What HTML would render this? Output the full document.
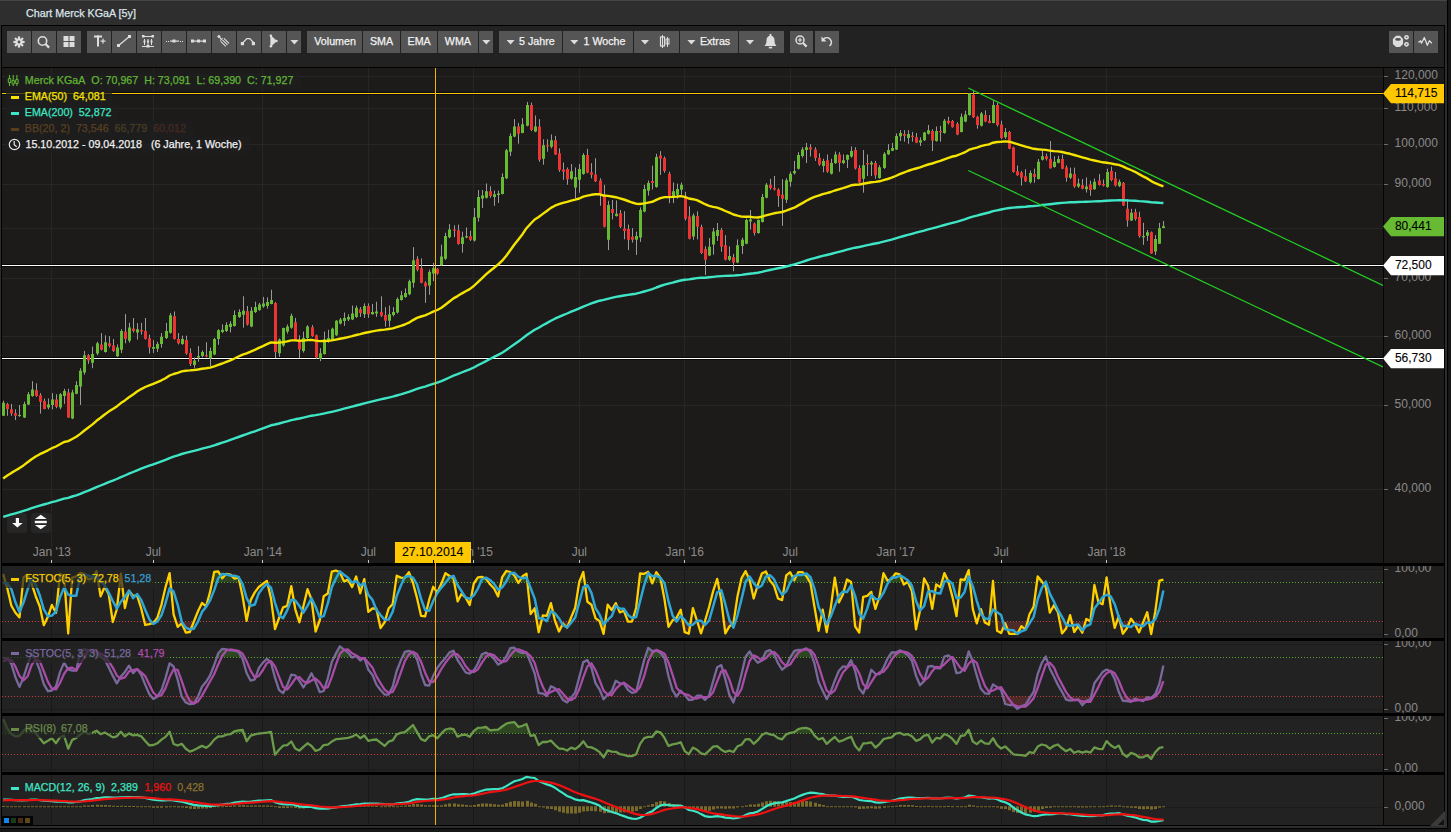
<!DOCTYPE html><html><head><meta charset="utf-8"><style>*{margin:0;padding:0;box-sizing:border-box}html,body{width:1451px;height:832px;overflow:hidden;background:#161616;font-family:"Liberation Sans", sans-serif}.a{position:absolute}.b{position:absolute;background:#555;top:31px;height:22px}.t{position:absolute;white-space:nowrap;-webkit-text-stroke:0.25px currentColor}.n{-webkit-text-stroke:0}</style></head><body><div class="a" style="left:0;top:0;width:1448px;height:829px;background:#000"></div><div class="a" style="left:0;top:0;width:1447px;height:828px;background:#2e2e2e;border-top:1px solid #454545"></div><div class="a" style="left:1px;top:25px;width:1444px;height:801px;background:#000"></div><div class="a" style="left:2px;top:26px;width:1442px;height:41px;background:#222"></div><div class="a" style="left:2px;top:68px;width:1442px;height:495px;background:#1c1b1a"></div><div class="a" style="left:2px;top:566px;width:1381px;height:72px;background:#222"></div><div class="a" style="left:1384px;top:566px;width:60px;height:72px;background:#1f1e1d"></div><div class="a" style="left:2px;top:641px;width:1381px;height:72px;background:#222"></div><div class="a" style="left:1384px;top:641px;width:60px;height:72px;background:#1f1e1d"></div><div class="a" style="left:2px;top:716px;width:1381px;height:56px;background:#222"></div><div class="a" style="left:1384px;top:716px;width:60px;height:56px;background:#1f1e1d"></div><div class="a" style="left:2px;top:775px;width:1381px;height:50px;background:#222"></div><div class="a" style="left:1384px;top:775px;width:60px;height:50px;background:#1f1e1d"></div><div class="a" style="left:7px;top:512.5px;width:20px;height:20px;background:#262626;border-radius:3px"></div><div class="a" style="left:31px;top:512.5px;width:20px;height:20px;background:#262626;border-radius:3px"></div><div class="a" style="left:1383px;top:68px;width:1px;height:757px;background:#050505"></div><svg width="1451" height="832" viewBox="0 0 1451 832" style="position:absolute;left:0;top:0"><defs><clipPath id="cm"><rect x="2" y="68" width="1381" height="495"/></clipPath><clipPath id="c1"><rect x="2" y="566" width="1381" height="72"/></clipPath><clipPath id="c2"><rect x="2" y="641" width="1381" height="72"/></clipPath><clipPath id="c3"><rect x="2" y="716" width="1381" height="56"/></clipPath><clipPath id="c4"><rect x="2" y="775" width="1381" height="50"/></clipPath></defs><g clip-path="url(#cm)"><line x1="51.5" y1="68" x2="51.5" y2="563" stroke="#262626" stroke-width="1"/><line x1="153.5" y1="68" x2="153.5" y2="563" stroke="#262626" stroke-width="1"/><line x1="262.5" y1="68" x2="262.5" y2="563" stroke="#262626" stroke-width="1"/><line x1="368.5" y1="68" x2="368.5" y2="563" stroke="#262626" stroke-width="1"/><line x1="473.5" y1="68" x2="473.5" y2="563" stroke="#262626" stroke-width="1"/><line x1="579.5" y1="68" x2="579.5" y2="563" stroke="#262626" stroke-width="1"/><line x1="684.5" y1="68" x2="684.5" y2="563" stroke="#262626" stroke-width="1"/><line x1="790.5" y1="68" x2="790.5" y2="563" stroke="#262626" stroke-width="1"/><line x1="895.5" y1="68" x2="895.5" y2="563" stroke="#262626" stroke-width="1"/><line x1="1001.5" y1="68" x2="1001.5" y2="563" stroke="#262626" stroke-width="1"/><line x1="1106.5" y1="68" x2="1106.5" y2="563" stroke="#262626" stroke-width="1"/><line x1="2" y1="76.5" x2="1383" y2="76.5" stroke="#262626" stroke-width="1"/><line x1="2" y1="108.5" x2="1383" y2="108.5" stroke="#262626" stroke-width="1"/><line x1="2" y1="144.5" x2="1383" y2="144.5" stroke="#262626" stroke-width="1"/><line x1="2" y1="184.5" x2="1383" y2="184.5" stroke="#262626" stroke-width="1"/><line x1="2" y1="228.5" x2="1383" y2="228.5" stroke="#262626" stroke-width="1"/><line x1="2" y1="278.5" x2="1383" y2="278.5" stroke="#262626" stroke-width="1"/><line x1="2" y1="336.5" x2="1383" y2="336.5" stroke="#262626" stroke-width="1"/><line x1="2" y1="405.5" x2="1383" y2="405.5" stroke="#262626" stroke-width="1"/><line x1="2" y1="489.5" x2="1383" y2="489.5" stroke="#262626" stroke-width="1"/></g><line x1="51.5" y1="566" x2="51.5" y2="638" stroke="#191919" stroke-width="1"/><line x1="153.5" y1="566" x2="153.5" y2="638" stroke="#191919" stroke-width="1"/><line x1="262.5" y1="566" x2="262.5" y2="638" stroke="#191919" stroke-width="1"/><line x1="368.5" y1="566" x2="368.5" y2="638" stroke="#191919" stroke-width="1"/><line x1="473.5" y1="566" x2="473.5" y2="638" stroke="#191919" stroke-width="1"/><line x1="579.5" y1="566" x2="579.5" y2="638" stroke="#191919" stroke-width="1"/><line x1="684.5" y1="566" x2="684.5" y2="638" stroke="#191919" stroke-width="1"/><line x1="790.5" y1="566" x2="790.5" y2="638" stroke="#191919" stroke-width="1"/><line x1="895.5" y1="566" x2="895.5" y2="638" stroke="#191919" stroke-width="1"/><line x1="1001.5" y1="566" x2="1001.5" y2="638" stroke="#191919" stroke-width="1"/><line x1="1106.5" y1="566" x2="1106.5" y2="638" stroke="#191919" stroke-width="1"/><line x1="2" y1="569.5" x2="1383" y2="569.5" stroke="#1b1b1b" stroke-width="1"/><line x1="2" y1="634.5" x2="1383" y2="634.5" stroke="#1b1b1b" stroke-width="1"/><line x1="51.5" y1="641" x2="51.5" y2="713" stroke="#191919" stroke-width="1"/><line x1="153.5" y1="641" x2="153.5" y2="713" stroke="#191919" stroke-width="1"/><line x1="262.5" y1="641" x2="262.5" y2="713" stroke="#191919" stroke-width="1"/><line x1="368.5" y1="641" x2="368.5" y2="713" stroke="#191919" stroke-width="1"/><line x1="473.5" y1="641" x2="473.5" y2="713" stroke="#191919" stroke-width="1"/><line x1="579.5" y1="641" x2="579.5" y2="713" stroke="#191919" stroke-width="1"/><line x1="684.5" y1="641" x2="684.5" y2="713" stroke="#191919" stroke-width="1"/><line x1="790.5" y1="641" x2="790.5" y2="713" stroke="#191919" stroke-width="1"/><line x1="895.5" y1="641" x2="895.5" y2="713" stroke="#191919" stroke-width="1"/><line x1="1001.5" y1="641" x2="1001.5" y2="713" stroke="#191919" stroke-width="1"/><line x1="1106.5" y1="641" x2="1106.5" y2="713" stroke="#191919" stroke-width="1"/><line x1="2" y1="644.5" x2="1383" y2="644.5" stroke="#1b1b1b" stroke-width="1"/><line x1="2" y1="709.5" x2="1383" y2="709.5" stroke="#1b1b1b" stroke-width="1"/><line x1="51.5" y1="716" x2="51.5" y2="772" stroke="#191919" stroke-width="1"/><line x1="153.5" y1="716" x2="153.5" y2="772" stroke="#191919" stroke-width="1"/><line x1="262.5" y1="716" x2="262.5" y2="772" stroke="#191919" stroke-width="1"/><line x1="368.5" y1="716" x2="368.5" y2="772" stroke="#191919" stroke-width="1"/><line x1="473.5" y1="716" x2="473.5" y2="772" stroke="#191919" stroke-width="1"/><line x1="579.5" y1="716" x2="579.5" y2="772" stroke="#191919" stroke-width="1"/><line x1="684.5" y1="716" x2="684.5" y2="772" stroke="#191919" stroke-width="1"/><line x1="790.5" y1="716" x2="790.5" y2="772" stroke="#191919" stroke-width="1"/><line x1="895.5" y1="716" x2="895.5" y2="772" stroke="#191919" stroke-width="1"/><line x1="1001.5" y1="716" x2="1001.5" y2="772" stroke="#191919" stroke-width="1"/><line x1="1106.5" y1="716" x2="1106.5" y2="772" stroke="#191919" stroke-width="1"/><line x1="2" y1="718.5" x2="1383" y2="718.5" stroke="#1b1b1b" stroke-width="1"/><line x1="2" y1="769.5" x2="1383" y2="769.5" stroke="#1b1b1b" stroke-width="1"/><line x1="51.5" y1="775" x2="51.5" y2="825" stroke="#191919" stroke-width="1"/><line x1="153.5" y1="775" x2="153.5" y2="825" stroke="#191919" stroke-width="1"/><line x1="262.5" y1="775" x2="262.5" y2="825" stroke="#191919" stroke-width="1"/><line x1="368.5" y1="775" x2="368.5" y2="825" stroke="#191919" stroke-width="1"/><line x1="473.5" y1="775" x2="473.5" y2="825" stroke="#191919" stroke-width="1"/><line x1="579.5" y1="775" x2="579.5" y2="825" stroke="#191919" stroke-width="1"/><line x1="684.5" y1="775" x2="684.5" y2="825" stroke="#191919" stroke-width="1"/><line x1="790.5" y1="775" x2="790.5" y2="825" stroke="#191919" stroke-width="1"/><line x1="895.5" y1="775" x2="895.5" y2="825" stroke="#191919" stroke-width="1"/><line x1="1001.5" y1="775" x2="1001.5" y2="825" stroke="#191919" stroke-width="1"/><line x1="1106.5" y1="775" x2="1106.5" y2="825" stroke="#191919" stroke-width="1"/><line x1="2" y1="807.5" x2="1383" y2="807.5" stroke="#1b1b1b" stroke-width="1"/><g clip-path="url(#cm)"><rect x="2" y="92" width="1381" height="3" fill="#060a16"/><rect x="2" y="93" width="1381" height="1" fill="#ffc800"/><rect x="2" y="264" width="1381" height="3" fill="#080808"/><rect x="2" y="265" width="1381" height="1" fill="#ffffff"/><rect x="2" y="357" width="1381" height="3" fill="#080808"/><rect x="2" y="358" width="1381" height="1" fill="#ffffff"/><path d="M3.5 400.7V415.8M7.5 402.8V415.8M11.5 403.9V415.8M15.5 409.3V420.1M19.5 405V416.9M24.5 401.7V418M28.5 392V405M32.5 381.2V396.8M36.5 383.3V396.8M40.5 393.1V413.6M44.5 398.5V409.3M48.5 398.5V409.3M52.5 393.1V409.3M56.5 394.2V408.2M60.5 393.1V409.3M64.5 388.8V403.9M68.5 388.8V418M72.5 389.8V419.1M76.5 381.2V394.2M80.5 368.2V405M84.5 350.9V374.7M88.5 354.1V363.9M92.5 346.6V368.2M97.5 341.8V355.2M101.5 333.1V350.5M105.5 335.3V352.6M109.5 336.2V347.6M113.5 339V352M117.5 344.4V356.9M121.5 329.2V353.1M125.5 314.1V343.3M129.5 322.8V342.7M133.5 318V332.5M137.5 323.2V339.6M141.5 322.8V334.7M145.5 318V339.6M149.5 334.7V353.5M153.5 340.1V353.1M157.5 341.8V352M161.5 333.1V347.6M166.5 322.8V339M170.5 313V333.6M174.5 311.5V339.6M178.5 333.1V344.4M182.5 335.7V344.8M186.5 335.7V354.8M190.5 348.3V366M194.5 357.4V367.8M198.5 346.1V361.7M202.5 350.5V357.4M206.5 342.2V357.4M210.5 347.6V366M214.5 337.9V355.2M218.5 329.2V344.8M222.5 324.4V333.1M226.5 322.3V332M230.5 321.2V332.4M234.5 310.4V326.6M239.5 309.3V317.9M243.5 296.3V327.7M247.5 306V325.5M251.5 307.1V327.2M255.5 301.7V313M259.5 302.8V310.8M263.5 296.9V307.8M267.5 297.4V308.6M271.5 289.8V304.3M275.5 302.1V358M279.5 338.5V356.9M283.5 327.7V346.7M287.5 324.4V333.7M291.5 313.6V328.8M295.5 317.9V340.7M299.5 335.3V358M303.5 331.6V352.6M307.5 325.1V339.6M312.5 325.1V336.8M316.5 334.6V359.1M320.5 348.2V361.2M324.5 331.6V354.7M328.5 329.8V342.8M332.5 327.7V341.1M336.5 320.1V335.9M340.5 317.9V324.4M344.5 312.5V325.9M348.5 314.3V321.2M352.5 305.6V320.1M356.5 305.6V317.9M360.5 307.1V316.9M364.5 303.4V317.9M368.5 303.4V317.9M372.5 303.9V314.7M376.5 301.7V316.9M381.5 296.3V316.9M385.5 307.1V326.6M389.5 305.6V326.6M393.5 307.1V316.4M397.5 297.4V313.6M401.5 290.9V300.6M405.5 288.3V297.8M409.5 279.6V295.2M413.5 247.2V287.6M417.5 256.3V271.4M421.5 258.4V283.3M425.5 281.2V302.8M429.5 269.7V294.8M433.5 262.8V281.2M437.5 268.2V274.7M441.5 244.7V265.7M445.5 232.8V259.9M449.5 224.2V238.2M454.5 225.3V237.2M458.5 224.6V244.7M462.5 231.7V252.7M466.5 227.4V238.2M470.5 230.7V241M474.5 207.9V241.5M478.5 190V221.6M482.5 190V207.9M486.5 183.5V198.6M490.5 186.3V197.8M494.5 190.6V205.8M498.5 190.6V203M502.5 173.3V194.3M506.5 148.9V179.2M510.5 133.3V156M514.5 119.2V137.2M518.5 122.9V143.7M522.5 118.1V133.3M527.5 101.9V126.4M531.5 102.6V131.1M535.5 115.5V132.2M539.5 119.2V161.8M543.5 139.3V164.7M547.5 139.3V151.7M551.5 134.4V148.4M555.5 135.9V154.9M559.5 148.4V171.8M563.5 162.5V179.8M567.5 167.5V184.8M571.5 164V179.8M575.5 167.5V198.2M579.5 164V192.8M583.5 153.2V174.8M587.5 148.9V173.3M591.5 163.1V178.3M595.5 158.2V182M600.5 178.3V205.8M604.5 184.8V227.4M608.5 200.8V250.1M612.5 199.9V219.4M616.5 200.4V216.6M620.5 210.1V228.1M624.5 211.2V239.3M628.5 224.6V250.1M632.5 228.1V242.6M636.5 231.7V254.9M640.5 207.3V241.9M644.5 184.8V212.3M648.5 180.5V195.6M652.5 165.7V189.5M656.5 153.8V187.8M660.5 151.1V174.9M664.5 156.5V172.8M669.5 171.7V203.1M673.5 182.5V203.1M677.5 183.6V198.7M681.5 182.5V194.8M685.5 191.8V220.4M689.5 206.3V239.4M693.5 213.4V239.8M697.5 211.3V239.4M701.5 224.7V253.9M705.5 246.3V274.9M709.5 238.1V256.1M713.5 227.9V254.6M717.5 223V240.9M721.5 227.9V251.7M725.5 235.1V260.4M729.5 246.3V261M733.5 253.9V271.2M737.5 239.4V263.2M742.5 237.7V253.9M746.5 218.6V244.2M750.5 210V229.5M754.5 222.5V235.5M758.5 219.3V233.8M762.5 194V222.5M766.5 183.1V198.3M770.5 178.8V189.6M774.5 176V190.5M778.5 188.3V206.9M782.5 179.2V225.8M786.5 178.2V203.1M790.5 171.7V186.8M794.5 160.9V174.5M798.5 152.2V169.5M802.5 147.2V157.6M806.5 142.9V163M810.5 144.2V156.5M815.5 147.2V160.9M819.5 153.3V165.8M823.5 158.7V172.3M827.5 154.4V172.8M831.5 158.7V174.5M835.5 151.5V164.1M839.5 152.2V171.7M843.5 154.4V164.1M847.5 154.4V168M851.5 146.4V157.6M855.5 147.2V169.5M859.5 165.2V183.6M863.5 150V192.7M867.5 154.4V176M871.5 160.9V176M875.5 160.9V178.8M879.5 165.2V178.8M884.5 152.2V168.9M888.5 144.2V155M892.5 142.9V151.1M896.5 133.4V150M900.5 130.2V141M904.5 130.2V141.7M908.5 130.2V143.8M912.5 131.9V141.7M916.5 133V143.2M920.5 137.3V146M924.5 131.9V141M928.5 125V134.5M932.5 129.3V151M936.5 126.5V141.7M940.5 125.9V141.7M944.5 119V133.7M948.5 116.8V124.4M952.5 120V127.6M957.5 122.2V135.2M961.5 113.5V132.4M965.5 110.7V122.2M969.5 93V115.7M973.5 90.8V117.9M977.5 115.7V128.7M981.5 112V126.5M985.5 110.3V122.2M989.5 115.1V123.3M993.5 99.9V123.3M997.5 102.7V126.5M1001.5 120.7V138.9M1005.5 128V138.9M1009.5 130.9V149.2M1013.5 146.7V172.6M1017.5 165.5V175.7M1021.5 170.9V185.6M1025.5 169.2V182.1M1030.5 170.5V183.4M1034.5 168.7V182.8M1038.5 159V179.5M1042.5 150.3V160.5M1046.5 153.6V160.5M1050.5 141V168.7M1054.5 156.2V167.6M1058.5 155.7V163.3M1062.5 154.7V169.2M1066.5 165.5V181.7M1070.5 167.6V179.1M1074.5 167.6V187.8M1078.5 178.5V187.8M1082.5 179.1V189.3M1086.5 177.4V192.5M1090.5 180.6V195.8M1094.5 178.5V189.9M1099.5 174.1V185.6M1103.5 179.5V186.5M1107.5 168.7V187.8M1111.5 166.6V181.3M1115.5 172V186.5M1119.5 179.5V187.1M1123.5 182V206M1127.5 199V226.7M1131.5 208.8V221M1135.5 208.8V220.7M1139.5 211.7V237.7M1143.5 222.8V244.9M1147.5 230.1V240.9M1151.5 231.5V253.9M1155.5 235.1V255M1159.5 222.8V244M1163.5 221V228.2" stroke="#9a9a9a" stroke-width="1" fill="none"/><path d="M2 402.8h3v13h-3zM18 414.9h3v1.2h-3zM23 403.9h3v13.6h-3zM27 394.2h3v10.4h-3zM31 389.4h3v6.5h-3zM47 404.6h3v3h-3zM51 399.6h3v5.4h-3zM59 394.2h3v13.4h-3zM63 390.9h3v5h-3zM71 392.4h3v26h-3zM75 385.1h3v8.7h-3zM79 370.8h3v15.8h-3zM83 355.2h3v17.3h-3zM91 354.1h3v8.7h-3zM96 343.3h3v10.2h-3zM104 342.2h3v9.7h-3zM116 347.6h3v8.7h-3zM120 331h3v18.8h-3zM128 327.5h3v13.2h-3zM136 329.2h3v3.2h-3zM152 347h3v1.7h-3zM156 344h3v4.8h-3zM160 336.8h3v7.1h-3zM165 331h3v6.9h-3zM169 315.2h3v17.5h-3zM181 339h3v5h-3zM193 360.6h3v4.3h-3zM197 356.1h3v1.3h-3zM201 352h3v3.9h-3zM209 350.9h3v7.6h-3zM213 339h3v15.6h-3zM217 330.3h3v8.7h-3zM221 329.8h3v2.2h-3zM225 325.1h3v5.8h-3zM229 323.8h3v3.2h-3zM233 315.1h3v10.8h-3zM238 312.1h3v4.8h-3zM242 310.8h3v3.9h-3zM250 310.8h3v15.8h-3zM254 307.1h3v5h-3zM258 304.5h3v5.4h-3zM262 303.4h3v3h-3zM266 302.1h3v3.9h-3zM270 300h3v3.9h-3zM278 339.6h3v13.6h-3zM282 328.1h3v17.3h-3zM286 326.6h3v5h-3zM290 315.8h3v11.9h-3zM302 338.1h3v13h-3zM306 326.6h3v11.5h-3zM319 353.2h3v5.8h-3zM323 339.6h3v14.5h-3zM327 338.1h3v3h-3zM331 328.8h3v11.5h-3zM335 320.8h3v14.5h-3zM339 319.5h3v3.9h-3zM343 317.9h3v3.2h-3zM347 316.9h3v2.6h-3zM351 313.6h3v5.8h-3zM355 307.8h3v9.1h-3zM363 306h3v8.2h-3zM371 312.1h3v2.2h-3zM375 311.4h3v2.2h-3zM388 314.3h3v6.5h-3zM392 312.1h3v3h-3zM396 299.1h3v13.4h-3zM400 295.2h3v4.8h-3zM404 293.1h3v3.9h-3zM408 281.2h3v13h-3zM412 260.2h3v22.5h-3zM428 272.1h3v13.4h-3zM432 268.2h3v5.4h-3zM440 256.6h3v8.7h-3zM444 236.1h3v22.7h-3zM448 229.6h3v7.6h-3zM461 237.2h3v6.9h-3zM465 236.3h3v1.3h-3zM473 217.2h3v23.2h-3zM477 197.1h3v20.6h-3zM481 195.6h3v3h-3zM485 191.3h3v6.5h-3zM493 194.3h3v2.8h-3zM497 193.4h3v1.7h-3zM501 177h3v16.9h-3zM505 150.2h3v28.1h-3zM509 135.9h3v15.8h-3zM513 126.4h3v10.2h-3zM521 124.2h3v8.7h-3zM526 105.1h3v20.6h-3zM534 126.4h3v5.2h-3zM542 145.2h3v13.6h-3zM550 140.2h3v6.5h-3zM570 171.2h3v7.6h-3zM574 177h3v10.4h-3zM578 169h3v10.8h-3zM582 154.9h3v19h-3zM607 205.1h3v34.6h-3zM615 213.8h3v2.2h-3zM635 236.1h3v3.7h-3zM639 210.1h3v27.5h-3zM643 189.1h3v22.5h-3zM647 183.1h3v7.6h-3zM655 157.1h3v29.9h-3zM672 191.2h3v6.5h-3zM676 189h3v5.8h-3zM680 184.7h3v5h-3zM692 215.6h3v21h-3zM708 246.8h3v8.7h-3zM712 231.6h3v13h-3zM716 230.1h3v5.8h-3zM728 256.1h3v3.7h-3zM736 245.3h3v17.3h-3zM741 239.8h3v6.1h-3zM745 219.9h3v23.8h-3zM749 219.3h3v2.2h-3zM757 219.9h3v13h-3zM761 197h3v25.1h-3zM765 184.7h3v13h-3zM785 180.3h3v19.5h-3zM789 173.8h3v8h-3zM793 171h3v2.2h-3zM797 155h3v13.8h-3zM801 149.4h3v6.5h-3zM805 147.2h3v2.8h-3zM822 160.9h3v5h-3zM830 163h3v10.8h-3zM834 154.4h3v8.7h-3zM842 160.2h3v2.8h-3zM846 155h3v4.8h-3zM850 151.1h3v5.4h-3zM862 165.2h3v13.6h-3zM870 162.4h3v2.2h-3zM878 167.3h3v10.8h-3zM883 153.7h3v14.3h-3zM887 150h3v4.3h-3zM891 147.9h3v2.8h-3zM895 136h3v13.4h-3zM899 133h3v3.2h-3zM907 134.1h3v3.9h-3zM919 140.2h3v2.2h-3zM923 132.4h3v7.8h-3zM927 130.2h3v3.5h-3zM935 130.9h3v10.2h-3zM943 120.7h3v12.3h-3zM960 116.8h3v15.1h-3zM964 114.6h3v6.9h-3zM968 93.4h3v21.6h-3zM980 113.5h3v12.3h-3zM992 104.9h3v18h-3zM1004 131.9h3v5.4h-3zM1029 173.1h3v9.1h-3zM1037 161.8h3v17.3h-3zM1041 156.2h3v3.5h-3zM1053 161.8h3v5.2h-3zM1057 159h3v3.7h-3zM1069 173.5h3v4.3h-3zM1077 183.4h3v3h-3zM1085 186.5h3v2.8h-3zM1093 181.7h3v7.6h-3zM1106 172h3v15.1h-3zM1118 181.7h3v4.3h-3zM1130 212.7h3v7.9h-3zM1142 236h3v1.2h-3zM1146 232.2h3v3.6h-3zM1154 239.1h3v12.5h-3zM1158 228.2h3v15.6h-3zM1162 226.2h3v1.7h-3z" fill="#66bb33"/><path d="M6 403.9h3v5h-3zM10 409.3h3v4.3h-3zM14 413.2h3v2.6h-3zM35 390.3h3v5.6h-3zM39 395.3h3v6.5h-3zM43 401.1h3v7.8h-3zM55 399.6h3v7.1h-3zM67 392.4h3v25.1h-3zM87 355.2h3v5.4h-3zM100 344.4h3v5.4h-3zM108 343.3h3v2.8h-3zM112 345.5h3v5.4h-3zM124 331.4h3v7.6h-3zM132 328.4h3v2.6h-3zM140 329.9h3v1.5h-3zM144 331h3v8h-3zM148 338.3h3v9.3h-3zM173 316.3h3v22.7h-3zM177 339h3v4.3h-3zM185 340.1h3v13.4h-3zM189 353.1h3v10.8h-3zM205 355.2h3v1.3h-3zM246 311.2h3v13.4h-3zM274 303h3v48.9h-3zM294 322.3h3v17.3h-3zM298 340.7h3v8.7h-3zM311 327.2h3v8.7h-3zM315 335.3h3v22.3h-3zM359 309.3h3v3.7h-3zM367 306h3v8.2h-3zM380 312.1h3v3.7h-3zM384 315.1h3v5.6h-3zM416 258.9h3v10.8h-3zM420 268.2h3v14.5h-3zM424 282.7h3v3.9h-3zM436 268.8h3v4.8h-3zM453 229.6h3v1.2h-3zM457 230.2h3v13.8h-3zM469 236.3h3v3.5h-3zM489 191.3h3v4.8h-3zM517 126.4h3v7.4h-3zM530 105.1h3v24.9h-3zM538 126.4h3v33.3h-3zM546 145.2h3v1.2h-3zM554 140.2h3v14.3h-3zM558 153.2h3v16.9h-3zM562 169.6h3v2.2h-3zM566 169h3v10.2h-3zM586 154.9h3v17.7h-3zM590 172.2h3v2.6h-3zM594 174.4h3v6.9h-3zM599 180.5h3v13h-3zM603 195.6h3v31.2h-3zM611 209h3v3.9h-3zM619 213.3h3v13.4h-3zM623 228.5h3v2.6h-3zM627 228.9h3v10.8h-3zM631 236.7h3v3h-3zM651 180.9h3v2.2h-3zM659 155.4h3v3.2h-3zM663 158h3v13h-3zM668 173.8h3v22.7h-3zM684 196.6h3v22.1h-3zM688 216.5h3v22.3h-3zM696 216h3v10.8h-3zM700 226.9h3v26h-3zM704 248.9h3v10.8h-3zM720 230.1h3v16.7h-3zM724 245.3h3v14.5h-3zM732 257.2h3v5.4h-3zM753 223.6h3v9.3h-3zM769 184.7h3v3.2h-3zM773 187.9h3v1.7h-3zM777 189.6h3v6.5h-3zM781 194.8h3v3.9h-3zM809 147.2h3v2.2h-3zM814 149.4h3v8.7h-3zM818 158h3v6.5h-3zM826 160.2h3v11.5h-3zM838 154.4h3v8.7h-3zM854 150h3v18.4h-3zM858 168h3v14.5h-3zM866 163h3v1.5h-3zM874 163h3v12.3h-3zM903 134.1h3v1.7h-3zM911 135.8h3v1.2h-3zM915 137.3h3v5.4h-3zM931 130.9h3v9.7h-3zM939 131.1h3v1.2h-3zM947 120.7h3v2.2h-3zM951 121.1h3v6.1h-3zM956 123.7h3v10.8h-3zM972 94.7h3v22.5h-3zM976 116.8h3v8.2h-3zM984 115.1h3v6.5h-3zM988 120.7h3v2.2h-3zM996 104.9h3v20.1h-3zM1000 124.4h3v13.6h-3zM1008 131.9h3v16.9h-3zM1012 147.5h3v24.5h-3zM1016 171.3h3v3.9h-3zM1020 172.6h3v5.2h-3zM1024 176.3h3v5h-3zM1033 174.1h3v2.8h-3zM1045 156.2h3v2.8h-3zM1049 159h3v9.3h-3zM1061 159h3v9.7h-3zM1065 167.6h3v10.2h-3zM1073 174.1h3v12.3h-3zM1081 185h3v3.7h-3zM1089 184.3h3v5.6h-3zM1098 180.6h3v4.3h-3zM1102 183.9h3v1.7h-3zM1110 170.9h3v9.1h-3zM1114 178.5h3v7.1h-3zM1122 182.9h3v22.6h-3zM1126 208.8h3v11.8h-3zM1134 212h3v6.9h-3zM1138 217.1h3v18.8h-3zM1150 232.2h3v21.3h-3z" fill="#ee3333"/><polyline points="3.2,478.5 7.3,475.5 11.4,472.9 15.4,470.5 19.5,468.1 23.5,465.4 27.6,462.3 31.6,459.2 35.7,456.5 39.8,454.2 43.8,452.3 47.9,450.3 51.9,448.2 56,446.5 60,444.3 64.1,442 68.2,441.1 72.2,439 76.3,436.8 80.3,433.9 84.4,430.5 88.4,427.5 92.5,424.4 96.5,420.8 100.6,417.8 104.7,414.5 108.7,411.6 112.8,409 116.8,406.4 120.9,403.1 124.9,400.4 129,397.3 133.1,394.4 137.1,391.6 141.2,389.1 145.2,387 149.3,385.4 153.3,383.8 157.4,382.1 161.5,380.3 165.5,378.2 169.6,375.5 173.6,374 177.7,372.8 181.7,371.4 185.8,370.7 189.8,370.4 193.9,370 198,369.5 202,368.8 206.1,368.3 210.1,367.6 214.2,366.4 218.2,364.9 222.3,363.5 226.4,361.9 230.4,360.3 234.5,358.5 238.5,356.5 242.6,354.6 246.6,353.4 250.7,351.6 254.8,349.8 258.8,347.9 262.9,346.1 266.9,344.2 271,342.4 275,342.8 279.1,342.6 283.1,342.1 287.2,341.4 291.3,340.4 295.3,340.4 299.4,340.7 303.4,340.6 307.5,340.1 311.5,339.9 315.6,340.6 319.7,341.1 323.7,341 327.8,340.9 331.8,340.4 335.9,339.6 339.9,338.8 344,338 348.1,337.1 352.1,336.2 356.2,335 360.2,334.1 364.3,333 368.3,332.2 372.4,331.4 376.4,330.6 380.5,330 384.6,329.6 388.6,329 392.7,328.4 396.7,327.2 400.8,325.9 404.8,324.5 408.9,322.7 413,320.1 417,317.9 421.1,316.5 425.1,315.3 429.2,313.5 433.2,311.6 437.3,310 441.4,307.8 445.4,304.7 449.5,301.5 453.5,298.4 457.6,296.1 461.6,293.6 465.7,291.2 469.7,289.1 473.8,286 477.9,282.1 481.9,278.3 486,274.4 490,271 494.1,267.7 498.1,264.5 502.2,260.7 506.3,255.7 510.3,250.2 514.4,244.5 518.4,239.4 522.5,234.2 526.5,228.2 530.6,223.8 534.7,219.5 538.7,217 542.8,213.9 546.8,211 550.9,207.9 554.9,205.7 559,204.2 563,202.9 567.1,201.9 571.2,200.7 575.2,199.7 579.3,198.5 583.3,196.7 587.4,195.7 591.4,194.8 595.5,194.3 599.6,194.3 603.6,195.5 607.7,195.9 611.7,196.5 615.8,197.2 619.8,198.3 623.9,199.5 628,201 632,202.5 636.1,203.7 640.1,204 644.2,203.4 648.2,202.6 652.3,201.8 656.3,199.9 660.4,198.2 664.5,197.1 668.5,197.1 672.6,196.9 676.6,196.6 680.7,196.1 684.7,196.9 688.8,198.5 692.9,199.2 696.9,200.2 701,202.1 705,204.2 709.1,205.8 713.1,206.8 717.2,207.7 721.3,209.1 725.3,211 729.4,212.7 733.4,214.5 737.5,215.7 741.5,216.6 745.6,216.7 749.6,216.8 753.7,217.4 757.8,217.5 761.8,216.7 765.9,215.4 769.9,214.3 774,213.3 778,212.6 782.1,212 786.2,210.7 790.2,209.2 794.3,207.7 798.3,205.4 802.4,203.1 806.4,200.7 810.5,198.6 814.5,196.9 818.6,195.6 822.7,194.2 826.7,193.2 830.8,192 834.8,190.5 838.9,189.3 842.9,188.2 847,186.8 851.1,185.3 855.1,184.7 859.2,184.6 863.2,183.8 867.3,183 871.3,182.2 875.4,181.9 879.5,181.3 883.5,180.2 887.6,179 891.6,177.7 895.7,176 899.7,174.2 903.8,172.6 907.8,171 911.9,169.6 916,168.5 920,167.4 924.1,165.9 928.1,164.5 932.2,163.5 936.2,162.2 940.3,160.9 944.4,159.3 948.4,157.8 952.5,156.5 956.5,155.7 960.6,154 964.6,152.4 968.7,149.9 972.8,148.6 976.8,147.6 980.9,146.2 984.9,145.2 989,144.3 993,142.7 997.1,142 1001.1,141.8 1005.2,141.4 1009.3,141.7 1013.3,142.9 1017.4,144.1 1021.4,145.4 1025.5,146.7 1029.5,147.7 1033.6,148.8 1037.7,149.3 1041.7,149.6 1045.8,149.9 1049.8,150.6 1053.9,151.1 1057.9,151.4 1062,152 1066.1,153 1070.1,153.8 1074.2,155 1078.2,156.1 1082.3,157.3 1086.3,158.4 1090.4,159.6 1094.4,160.5 1098.5,161.4 1102.6,162.3 1106.6,162.7 1110.7,163.4 1114.7,164.2 1118.8,164.9 1122.8,166.4 1126.9,168.4 1131,170 1135,171.8 1139.1,174.1 1143.1,176.4 1147.2,178.4 1151.2,181.1 1155.3,183.2 1159.4,184.9 1163.4,186.4" fill="none" stroke="#f5e400" stroke-width="2.4" stroke-linejoin="round"/><polyline points="3.2,516.8 7.3,515.6 11.4,514.4 15.4,513.3 19.5,512.2 23.5,510.9 27.6,509.6 31.6,508.1 35.7,506.8 39.8,505.6 43.8,504.5 47.9,503.4 51.9,502.2 56,501.1 60,499.9 64.1,498.7 68.2,497.8 72.2,496.5 76.3,495.3 80.3,493.8 84.4,492.1 88.4,490.6 92.5,488.9 96.5,487.2 100.6,485.5 104.7,483.8 108.7,482.1 112.8,480.6 116.8,479 120.9,477.2 124.9,475.5 129,473.7 133.1,472 137.1,470.3 141.2,468.6 145.2,467.1 149.3,465.7 153.3,464.3 157.4,462.9 161.5,461.4 165.5,459.9 169.6,458.1 173.6,456.7 177.7,455.4 181.7,454 185.8,452.9 189.8,451.9 193.9,450.9 198,449.8 202,448.7 206.1,447.7 210.1,446.6 214.2,445.3 218.2,444 222.3,442.7 226.4,441.3 230.4,439.9 234.5,438.4 238.5,437 242.6,435.5 246.6,434.2 250.7,432.7 254.8,431.3 258.8,429.8 262.9,428.3 266.9,426.8 271,425.3 275,424.5 279.1,423.5 283.1,422.4 287.2,421.4 291.3,420.2 295.3,419.3 299.4,418.5 303.4,417.6 307.5,416.6 311.5,415.7 315.6,415.1 319.7,414.4 323.7,413.6 327.8,412.7 331.8,411.8 335.9,410.8 339.9,409.8 344,408.7 348.1,407.7 352.1,406.6 356.2,405.5 360.2,404.5 364.3,403.3 368.3,402.3 372.4,401.3 376.4,400.3 380.5,399.4 384.6,398.5 388.6,397.6 392.7,396.6 396.7,395.5 400.8,394.4 404.8,393.2 408.9,391.9 413,390.3 417,388.9 421.1,387.7 425.1,386.6 429.2,385.2 433.2,383.9 437.3,382.6 441.4,381.1 445.4,379.4 449.5,377.5 453.5,375.7 457.6,374.2 461.6,372.5 465.7,370.9 469.7,369.3 473.8,367.5 477.9,365.3 481.9,363.2 486,361.1 490,359 494.1,356.9 498.1,354.9 502.2,352.7 506.3,350 510.3,347.1 514.4,344.2 518.4,341.4 522.5,338.4 526.5,335.2 530.6,332.5 534.7,329.8 538.7,327.7 542.8,325.3 546.8,323.1 550.9,320.7 554.9,318.7 559,316.8 563,315.1 567.1,313.5 571.2,311.7 575.2,310.1 579.3,308.4 583.3,306.6 587.4,305 591.4,303.4 595.5,302 599.6,300.7 603.6,299.9 607.7,298.8 611.7,297.9 615.8,296.9 619.8,296.2 623.9,295.5 628,294.9 632,294.3 636.1,293.7 640.1,292.7 644.2,291.5 648.2,290.3 652.3,289.1 656.3,287.5 660.4,286 664.5,284.6 668.5,283.6 672.6,282.6 676.6,281.5 680.7,280.5 684.7,279.8 688.8,279.4 692.9,278.7 696.9,278.1 701,277.8 705,277.7 709.1,277.3 713.1,276.9 717.2,276.4 721.3,276.1 725.3,275.9 729.4,275.7 733.4,275.6 737.5,275.2 741.5,274.9 745.6,274.3 749.6,273.7 753.7,273.3 757.8,272.7 761.8,271.9 765.9,270.9 769.9,270 774,269.1 778,268.3 782.1,267.5 786.2,266.5 790.2,265.5 794.3,264.4 798.3,263.2 802.4,261.8 806.4,260.5 810.5,259.2 814.5,258.1 818.6,257 822.7,255.9 826.7,255 830.8,254 834.8,252.8 838.9,251.8 842.9,250.8 847,249.7 851.1,248.6 855.1,247.7 859.2,247 863.2,246.1 867.3,245.2 871.3,244.3 875.4,243.5 879.5,242.7 883.5,241.7 887.6,240.6 891.6,239.6 895.7,238.4 899.7,237.2 903.8,236 907.8,234.9 911.9,233.8 916,232.7 920,231.7 924.1,230.6 928.1,229.4 932.2,228.4 936.2,227.3 940.3,226.2 944.4,225 948.4,223.9 952.5,222.8 956.5,221.8 960.6,220.6 964.6,219.4 968.7,217.9 972.8,216.7 976.8,215.7 980.9,214.5 984.9,213.5 989,212.5 993,211.2 997.1,210.3 1001.1,209.5 1005.2,208.6 1009.3,208 1013.3,207.6 1017.4,207.3 1021.4,207 1025.5,206.7 1029.5,206.3 1033.6,206 1037.7,205.6 1041.7,205 1045.8,204.6 1049.8,204.2 1053.9,203.7 1057.9,203.3 1062,202.9 1066.1,202.6 1070.1,202.3 1074.2,202.2 1078.2,202 1082.3,201.9 1086.3,201.7 1090.4,201.6 1094.4,201.4 1098.5,201.2 1102.6,201 1106.6,200.7 1110.7,200.5 1114.7,200.4 1118.8,200.2 1122.8,200.2 1126.9,200.4 1131,200.6 1135,200.7 1139.1,201.1 1143.1,201.4 1147.2,201.7 1151.2,202.2 1155.3,202.5 1159.4,202.8 1163.4,203" fill="none" stroke="#3fe6c6" stroke-width="2.4" stroke-linejoin="round"/><line x1="968.3" y1="88" x2="1383" y2="285.4" stroke="#22cc22" stroke-width="1.3"/><line x1="968.3" y1="170.5" x2="1383" y2="367" stroke="#22cc22" stroke-width="1.3"/></g><g clip-path="url(#c1)"><clipPath id="f1g"><rect x="2" y="566" width="1381" height="16.399999999999977"/></clipPath><clipPath id="f1r"><rect x="2" y="621.4" width="1381" height="16.600000000000023"/></clipPath><polygon clip-path="url(#f1g)" points="3.2,574.1 7.3,588.3 11.4,605.7 15.4,612.8 19.5,617.4 23.5,577.2 27.6,574.6 31.6,583.7 35.7,596.2 39.8,606.5 43.8,625.2 47.9,616.8 51.9,604.9 56,612.9 60,573.8 64.1,576.4 68.2,633.5 72.2,577.6 76.3,576.4 80.3,572.9 84.4,573.9 88.4,579.4 92.5,578.4 96.5,571.1 100.6,596.3 104.7,586.8 108.7,594.2 112.8,622 116.8,609.5 120.9,573.6 124.9,608.1 129,590.6 133.1,595.9 137.1,595.5 141.2,608.5 145.2,625 149.3,624.1 153.3,623 157.4,617.6 161.5,604.6 165.5,587.3 169.6,573.1 173.6,614.3 177.7,626.9 181.7,623.4 185.8,632.6 189.8,632 193.9,621.5 198,611.3 202,603 206.1,606.3 210.1,591.9 214.2,572 218.2,571.4 222.3,578.3 226.4,573.8 230.4,574.6 234.5,578.7 238.5,577.3 242.6,596.2 246.6,620.9 250.7,600.1 254.8,592.4 258.8,587 262.9,583.8 266.9,580.9 271,598.4 275,629.1 279.1,618 283.1,607.4 287.2,605.9 291.3,586.2 295.3,609.3 299.4,622.3 303.4,606.2 307.5,589.2 311.5,599.4 315.6,631.6 319.7,620.5 323.7,596.2 327.8,593.5 331.8,571.6 335.9,570.5 339.9,572.2 344,581.4 348.1,579.6 352.1,587.1 356.2,576.5 360.2,593.3 364.3,579.1 368.3,611.9 372.4,608.5 376.4,608.7 380.5,628.1 384.6,622.3 388.6,608.6 392.7,603.9 396.7,575.7 400.8,577.6 404.8,577.8 408.9,572.2 413,583 417,597.9 421.1,615.9 425.1,616.4 429.2,599.7 433.2,586.8 437.3,592.5 441.4,583.6 445.4,573.1 449.5,576 453.5,578.3 457.6,601.4 461.6,593.8 465.7,597.6 469.7,605 473.8,583.5 477.9,577.4 481.9,576.9 486,578.7 490,584.3 494.1,588.5 498.1,596.4 502.2,577.1 506.3,571 510.3,572 514.4,575.5 518.4,583 522.5,576.3 526.5,573.6 530.6,614 534.7,608.3 538.7,632.2 542.8,615.4 546.8,615.8 550.9,603.1 554.9,620.5 559,631.5 563,623.5 567.1,627.6 571.2,617.1 575.2,607.8 579.3,581.7 583.3,572 587.4,601.8 591.4,604.7 595.5,618.2 599.6,621.1 603.6,633.9 607.7,604.6 611.7,610 615.8,603.1 619.8,612.4 623.9,610.8 628,621.7 632,621.5 636.1,608 640.1,573.5 644.2,573.8 648.2,571.9 652.3,583.3 656.3,572.1 660.4,578 664.5,599.4 668.5,626.8 672.6,620.3 676.6,617.7 680.7,609.7 684.7,632.2 688.8,633.7 692.9,608.1 696.9,620.5 701,633.4 705,621 709.1,607 713.1,591.4 717.2,578.9 721.3,600.3 725.3,633.3 729.4,626.3 733.4,623.3 737.5,596.3 741.5,578.3 745.6,571.1 749.6,580 753.7,598.5 757.8,584.8 761.8,573.6 765.9,571.4 769.9,580.5 774,585.6 778,598.5 782.1,600.1 786.2,575.4 790.2,572.2 794.3,580.3 798.3,572.1 802.4,572.1 806.4,576.1 810.5,583.2 814.5,607 818.6,630.8 822.7,609.7 826.7,632 830.8,607.6 834.8,577.6 838.9,602.4 842.9,594.4 847,579.5 851.1,582 855.1,626.3 859.2,632.6 863.2,596.8 867.3,595.9 871.3,591.9 875.4,608.9 879.5,596.7 883.5,573.2 887.6,580.8 891.6,578.8 895.7,573.3 899.7,574.4 903.8,584.5 907.8,581.8 911.9,591.1 916,629.3 920,610.7 924.1,578.5 928.1,585.8 932.2,608.9 936.2,584.4 940.3,587.2 944.4,573.1 948.4,581.4 952.5,597.1 956.5,616.2 960.6,579.4 964.6,580 968.7,570.1 972.8,609 976.8,623.4 980.9,609.2 984.9,622.6 989,624.8 993,581 997.1,630.8 1001.1,633 1005.2,623.3 1009.3,633.9 1013.3,633.9 1017.4,633.9 1021.4,626.2 1025.5,629.6 1029.5,614.2 1033.6,606.9 1037.7,576.5 1041.7,581.3 1045.8,587 1049.8,612.6 1053.9,605.3 1057.9,612.1 1062,633.4 1066.1,628.5 1070.1,615.1 1074.2,632 1078.2,626.2 1082.3,632.7 1086.3,619 1090.4,621.3 1094.4,585 1098.5,602.4 1102.6,604.3 1106.6,577.4 1110.7,607.2 1114.7,627.9 1118.8,616.2 1122.8,633.7 1126.9,628.3 1131,618.7 1135,624.2 1139.1,632.4 1143.1,622.3 1147.2,612.2 1151.2,634 1155.3,611.4 1159.4,580.6 1163.4,579.7 1163.4,582.4 3.2,582.4" fill="#2f4622"/><polygon clip-path="url(#f1r)" points="3.2,574.1 7.3,588.3 11.4,605.7 15.4,612.8 19.5,617.4 23.5,577.2 27.6,574.6 31.6,583.7 35.7,596.2 39.8,606.5 43.8,625.2 47.9,616.8 51.9,604.9 56,612.9 60,573.8 64.1,576.4 68.2,633.5 72.2,577.6 76.3,576.4 80.3,572.9 84.4,573.9 88.4,579.4 92.5,578.4 96.5,571.1 100.6,596.3 104.7,586.8 108.7,594.2 112.8,622 116.8,609.5 120.9,573.6 124.9,608.1 129,590.6 133.1,595.9 137.1,595.5 141.2,608.5 145.2,625 149.3,624.1 153.3,623 157.4,617.6 161.5,604.6 165.5,587.3 169.6,573.1 173.6,614.3 177.7,626.9 181.7,623.4 185.8,632.6 189.8,632 193.9,621.5 198,611.3 202,603 206.1,606.3 210.1,591.9 214.2,572 218.2,571.4 222.3,578.3 226.4,573.8 230.4,574.6 234.5,578.7 238.5,577.3 242.6,596.2 246.6,620.9 250.7,600.1 254.8,592.4 258.8,587 262.9,583.8 266.9,580.9 271,598.4 275,629.1 279.1,618 283.1,607.4 287.2,605.9 291.3,586.2 295.3,609.3 299.4,622.3 303.4,606.2 307.5,589.2 311.5,599.4 315.6,631.6 319.7,620.5 323.7,596.2 327.8,593.5 331.8,571.6 335.9,570.5 339.9,572.2 344,581.4 348.1,579.6 352.1,587.1 356.2,576.5 360.2,593.3 364.3,579.1 368.3,611.9 372.4,608.5 376.4,608.7 380.5,628.1 384.6,622.3 388.6,608.6 392.7,603.9 396.7,575.7 400.8,577.6 404.8,577.8 408.9,572.2 413,583 417,597.9 421.1,615.9 425.1,616.4 429.2,599.7 433.2,586.8 437.3,592.5 441.4,583.6 445.4,573.1 449.5,576 453.5,578.3 457.6,601.4 461.6,593.8 465.7,597.6 469.7,605 473.8,583.5 477.9,577.4 481.9,576.9 486,578.7 490,584.3 494.1,588.5 498.1,596.4 502.2,577.1 506.3,571 510.3,572 514.4,575.5 518.4,583 522.5,576.3 526.5,573.6 530.6,614 534.7,608.3 538.7,632.2 542.8,615.4 546.8,615.8 550.9,603.1 554.9,620.5 559,631.5 563,623.5 567.1,627.6 571.2,617.1 575.2,607.8 579.3,581.7 583.3,572 587.4,601.8 591.4,604.7 595.5,618.2 599.6,621.1 603.6,633.9 607.7,604.6 611.7,610 615.8,603.1 619.8,612.4 623.9,610.8 628,621.7 632,621.5 636.1,608 640.1,573.5 644.2,573.8 648.2,571.9 652.3,583.3 656.3,572.1 660.4,578 664.5,599.4 668.5,626.8 672.6,620.3 676.6,617.7 680.7,609.7 684.7,632.2 688.8,633.7 692.9,608.1 696.9,620.5 701,633.4 705,621 709.1,607 713.1,591.4 717.2,578.9 721.3,600.3 725.3,633.3 729.4,626.3 733.4,623.3 737.5,596.3 741.5,578.3 745.6,571.1 749.6,580 753.7,598.5 757.8,584.8 761.8,573.6 765.9,571.4 769.9,580.5 774,585.6 778,598.5 782.1,600.1 786.2,575.4 790.2,572.2 794.3,580.3 798.3,572.1 802.4,572.1 806.4,576.1 810.5,583.2 814.5,607 818.6,630.8 822.7,609.7 826.7,632 830.8,607.6 834.8,577.6 838.9,602.4 842.9,594.4 847,579.5 851.1,582 855.1,626.3 859.2,632.6 863.2,596.8 867.3,595.9 871.3,591.9 875.4,608.9 879.5,596.7 883.5,573.2 887.6,580.8 891.6,578.8 895.7,573.3 899.7,574.4 903.8,584.5 907.8,581.8 911.9,591.1 916,629.3 920,610.7 924.1,578.5 928.1,585.8 932.2,608.9 936.2,584.4 940.3,587.2 944.4,573.1 948.4,581.4 952.5,597.1 956.5,616.2 960.6,579.4 964.6,580 968.7,570.1 972.8,609 976.8,623.4 980.9,609.2 984.9,622.6 989,624.8 993,581 997.1,630.8 1001.1,633 1005.2,623.3 1009.3,633.9 1013.3,633.9 1017.4,633.9 1021.4,626.2 1025.5,629.6 1029.5,614.2 1033.6,606.9 1037.7,576.5 1041.7,581.3 1045.8,587 1049.8,612.6 1053.9,605.3 1057.9,612.1 1062,633.4 1066.1,628.5 1070.1,615.1 1074.2,632 1078.2,626.2 1082.3,632.7 1086.3,619 1090.4,621.3 1094.4,585 1098.5,602.4 1102.6,604.3 1106.6,577.4 1110.7,607.2 1114.7,627.9 1118.8,616.2 1122.8,633.7 1126.9,628.3 1131,618.7 1135,624.2 1139.1,632.4 1143.1,622.3 1147.2,612.2 1151.2,634 1155.3,611.4 1159.4,580.6 1163.4,579.7 1163.4,621.4 3.2,621.4" fill="#4e2a2a"/><line x1="2" y1="582.5" x2="1383" y2="582.5" stroke="#5aa82a" stroke-width="1" stroke-dasharray="1 2"/><line x1="2" y1="621.5" x2="1383" y2="621.5" stroke="#c04040" stroke-width="1" stroke-dasharray="1 2"/><polyline points="3.2,574.1 7.3,588.3 11.4,605.7 15.4,612.8 19.5,617.4 23.5,577.2 27.6,574.6 31.6,583.7 35.7,596.2 39.8,606.5 43.8,625.2 47.9,616.8 51.9,604.9 56,612.9 60,573.8 64.1,576.4 68.2,633.5 72.2,577.6 76.3,576.4 80.3,572.9 84.4,573.9 88.4,579.4 92.5,578.4 96.5,571.1 100.6,596.3 104.7,586.8 108.7,594.2 112.8,622 116.8,609.5 120.9,573.6 124.9,608.1 129,590.6 133.1,595.9 137.1,595.5 141.2,608.5 145.2,625 149.3,624.1 153.3,623 157.4,617.6 161.5,604.6 165.5,587.3 169.6,573.1 173.6,614.3 177.7,626.9 181.7,623.4 185.8,632.6 189.8,632 193.9,621.5 198,611.3 202,603 206.1,606.3 210.1,591.9 214.2,572 218.2,571.4 222.3,578.3 226.4,573.8 230.4,574.6 234.5,578.7 238.5,577.3 242.6,596.2 246.6,620.9 250.7,600.1 254.8,592.4 258.8,587 262.9,583.8 266.9,580.9 271,598.4 275,629.1 279.1,618 283.1,607.4 287.2,605.9 291.3,586.2 295.3,609.3 299.4,622.3 303.4,606.2 307.5,589.2 311.5,599.4 315.6,631.6 319.7,620.5 323.7,596.2 327.8,593.5 331.8,571.6 335.9,570.5 339.9,572.2 344,581.4 348.1,579.6 352.1,587.1 356.2,576.5 360.2,593.3 364.3,579.1 368.3,611.9 372.4,608.5 376.4,608.7 380.5,628.1 384.6,622.3 388.6,608.6 392.7,603.9 396.7,575.7 400.8,577.6 404.8,577.8 408.9,572.2 413,583 417,597.9 421.1,615.9 425.1,616.4 429.2,599.7 433.2,586.8 437.3,592.5 441.4,583.6 445.4,573.1 449.5,576 453.5,578.3 457.6,601.4 461.6,593.8 465.7,597.6 469.7,605 473.8,583.5 477.9,577.4 481.9,576.9 486,578.7 490,584.3 494.1,588.5 498.1,596.4 502.2,577.1 506.3,571 510.3,572 514.4,575.5 518.4,583 522.5,576.3 526.5,573.6 530.6,614 534.7,608.3 538.7,632.2 542.8,615.4 546.8,615.8 550.9,603.1 554.9,620.5 559,631.5 563,623.5 567.1,627.6 571.2,617.1 575.2,607.8 579.3,581.7 583.3,572 587.4,601.8 591.4,604.7 595.5,618.2 599.6,621.1 603.6,633.9 607.7,604.6 611.7,610 615.8,603.1 619.8,612.4 623.9,610.8 628,621.7 632,621.5 636.1,608 640.1,573.5 644.2,573.8 648.2,571.9 652.3,583.3 656.3,572.1 660.4,578 664.5,599.4 668.5,626.8 672.6,620.3 676.6,617.7 680.7,609.7 684.7,632.2 688.8,633.7 692.9,608.1 696.9,620.5 701,633.4 705,621 709.1,607 713.1,591.4 717.2,578.9 721.3,600.3 725.3,633.3 729.4,626.3 733.4,623.3 737.5,596.3 741.5,578.3 745.6,571.1 749.6,580 753.7,598.5 757.8,584.8 761.8,573.6 765.9,571.4 769.9,580.5 774,585.6 778,598.5 782.1,600.1 786.2,575.4 790.2,572.2 794.3,580.3 798.3,572.1 802.4,572.1 806.4,576.1 810.5,583.2 814.5,607 818.6,630.8 822.7,609.7 826.7,632 830.8,607.6 834.8,577.6 838.9,602.4 842.9,594.4 847,579.5 851.1,582 855.1,626.3 859.2,632.6 863.2,596.8 867.3,595.9 871.3,591.9 875.4,608.9 879.5,596.7 883.5,573.2 887.6,580.8 891.6,578.8 895.7,573.3 899.7,574.4 903.8,584.5 907.8,581.8 911.9,591.1 916,629.3 920,610.7 924.1,578.5 928.1,585.8 932.2,608.9 936.2,584.4 940.3,587.2 944.4,573.1 948.4,581.4 952.5,597.1 956.5,616.2 960.6,579.4 964.6,580 968.7,570.1 972.8,609 976.8,623.4 980.9,609.2 984.9,622.6 989,624.8 993,581 997.1,630.8 1001.1,633 1005.2,623.3 1009.3,633.9 1013.3,633.9 1017.4,633.9 1021.4,626.2 1025.5,629.6 1029.5,614.2 1033.6,606.9 1037.7,576.5 1041.7,581.3 1045.8,587 1049.8,612.6 1053.9,605.3 1057.9,612.1 1062,633.4 1066.1,628.5 1070.1,615.1 1074.2,632 1078.2,626.2 1082.3,632.7 1086.3,619 1090.4,621.3 1094.4,585 1098.5,602.4 1102.6,604.3 1106.6,577.4 1110.7,607.2 1114.7,627.9 1118.8,616.2 1122.8,633.7 1126.9,628.3 1131,618.7 1135,624.2 1139.1,632.4 1143.1,622.3 1147.2,612.2 1151.2,634 1155.3,611.4 1159.4,580.6 1163.4,579.7" fill="none" stroke="#ffd000" stroke-width="2.3" stroke-linejoin="round"/><polyline points="3.2,582.9 7.3,583.2 11.4,589.3 15.4,602.3 19.5,612 23.5,602.5 27.6,589.7 31.6,578.5 35.7,584.8 39.8,595.5 43.8,609.3 47.9,616.2 51.9,615.6 56,611.5 60,597.2 64.1,587.7 68.2,594.6 72.2,595.8 76.3,595.8 80.3,575.6 84.4,574.4 88.4,575.4 92.5,577.2 96.5,576.3 100.6,581.9 104.7,584.8 108.7,592.5 112.8,601 116.8,608.5 120.9,601.7 124.9,597 129,590.7 133.1,598.2 137.1,594 141.2,600 145.2,609.7 149.3,619.2 153.3,624 157.4,621.5 161.5,615.1 165.5,603.2 169.6,588.4 173.6,591.6 177.7,604.8 181.7,621.6 185.8,627.6 189.8,629.3 193.9,628.7 198,621.6 202,611.9 206.1,606.9 210.1,600.4 214.2,590.1 218.2,578.4 222.3,573.9 226.4,574.5 230.4,575.5 234.5,575.7 238.5,576.9 242.6,584.1 246.6,598.1 250.7,605.8 254.8,604.5 258.8,593.2 262.9,587.7 266.9,583.9 271,587.7 275,602.8 279.1,615.2 283.1,618.2 287.2,610.4 291.3,599.8 295.3,600.5 299.4,605.9 303.4,612.6 307.5,605.9 311.5,598.3 315.6,606.8 319.7,617.2 323.7,616.1 327.8,603.4 331.8,587.1 335.9,578.5 339.9,571.4 344,574.7 348.1,577.7 352.1,582.7 356.2,581 360.2,585.6 364.3,583 368.3,594.8 372.4,599.8 376.4,609.7 380.5,615.1 384.6,619.7 388.6,619.6 392.7,611.6 396.7,596.1 400.8,585.7 404.8,577 408.9,575.9 413,577.7 417,584.4 421.1,598.9 425.1,610.1 429.2,610.7 433.2,601 437.3,593 441.4,587.6 445.4,583 449.5,577.5 453.5,575.8 457.6,585.2 461.6,591.2 465.7,597.6 469.7,598.8 473.8,595.4 477.9,588.6 481.9,579.3 486,577.7 490,580 494.1,583.9 498.1,589.7 502.2,587.3 506.3,581.5 510.3,573.3 514.4,572.8 518.4,576.8 522.5,578.3 526.5,577.6 530.6,588 534.7,598.6 538.7,618.2 542.8,618.6 546.8,621.1 550.9,611.4 554.9,613.2 559,618.4 563,625.2 567.1,627.5 571.2,622.7 575.2,617.5 579.3,602.2 583.3,587.2 587.4,585.2 591.4,592.8 595.5,608.2 599.6,614.7 603.6,624.4 607.7,619.9 611.7,616.2 615.8,605.9 619.8,608.5 623.9,608.8 628,615 632,618 636.1,617.1 640.1,601 644.2,585.1 648.2,573 652.3,576.3 656.3,575.7 660.4,577.8 664.5,583.2 668.5,601.4 672.6,615.5 676.6,621.6 680.7,615.9 684.7,619.9 688.8,625.2 692.9,624.7 696.9,620.8 701,620.7 705,625 709.1,620.5 713.1,606.5 717.2,592.4 721.3,590.2 725.3,604.2 729.4,620 733.4,627.6 737.5,615.3 741.5,599.3 745.6,581.9 749.6,576.5 753.7,583.2 757.8,587.8 761.8,585.6 765.9,576.6 769.9,575.2 774,579.2 778,588.2 782.1,594.8 786.2,591.4 790.2,582.6 794.3,576 798.3,574.9 802.4,574.9 806.4,573.5 810.5,577.2 814.5,588.8 818.6,607 822.7,615.8 826.7,624.2 830.8,616.4 834.8,605.7 838.9,595.9 842.9,591.5 847,592.1 851.1,585.3 855.1,595.9 859.2,613.6 863.2,618.6 867.3,608.4 871.3,594.9 875.4,598.9 879.5,599.2 883.5,592.9 887.6,583.6 891.6,577.6 895.7,577.6 899.7,575.5 903.8,577.4 907.8,580.2 911.9,585.8 916,600.7 920,610.4 924.1,606.2 928.1,591.7 932.2,591.1 936.2,593.1 940.3,593.5 944.4,581.6 948.4,580.5 952.5,583.8 956.5,598.2 960.6,597.5 964.6,591.9 968.7,576.5 972.8,586.4 976.8,600.8 980.9,613.9 984.9,618.4 989,618.9 993,609.5 997.1,612.2 1001.1,615 1005.2,629.1 1009.3,630.1 1013.3,630.3 1017.4,633.9 1021.4,631.3 1025.5,629.9 1029.5,623.3 1033.6,616.9 1037.7,599.2 1041.7,588.2 1045.8,581.6 1049.8,593.6 1053.9,601.6 1057.9,610 1062,616.9 1066.1,624.7 1070.1,625.7 1074.2,625.2 1078.2,624.4 1082.3,630.3 1086.3,626 1090.4,624.3 1094.4,608.4 1098.5,602.9 1102.6,597.2 1106.6,594.7 1110.7,596.3 1114.7,604.2 1118.8,617.1 1122.8,626 1126.9,626.1 1131,626.9 1135,623.7 1139.1,625.1 1143.1,626.3 1147.2,622.3 1151.2,622.9 1155.3,619.2 1159.4,608.7 1163.4,590.6" fill="none" stroke="#2ea6d6" stroke-width="2.5" stroke-linejoin="round"/></g><g clip-path="url(#c2)"><clipPath id="f2g"><rect x="2" y="641" width="1381" height="16.299999999999955"/></clipPath><clipPath id="f2r"><rect x="2" y="696.3" width="1381" height="16.700000000000045"/></clipPath><polygon clip-path="url(#f2g)" points="3.2,657.8 7.3,658.1 11.4,664.2 15.4,677.2 19.5,686.9 23.5,677.4 27.6,664.6 31.6,653.4 35.7,659.7 39.8,670.4 43.8,684.2 47.9,691.1 51.9,690.5 56,686.4 60,672.1 64.1,662.6 68.2,669.5 72.2,670.7 76.3,670.7 80.3,650.5 84.4,649.3 88.4,650.3 92.5,652.1 96.5,651.2 100.6,656.8 104.7,659.7 108.7,667.4 112.8,675.9 116.8,683.4 120.9,676.6 124.9,671.9 129,665.6 133.1,673.1 137.1,668.9 141.2,674.9 145.2,684.6 149.3,694.1 153.3,698.9 157.4,696.4 161.5,690 165.5,678.1 169.6,663.3 173.6,666.5 177.7,679.7 181.7,696.5 185.8,702.5 189.8,704.2 193.9,703.6 198,696.5 202,686.8 206.1,681.8 210.1,675.3 214.2,665 218.2,653.3 222.3,648.8 226.4,649.4 230.4,650.4 234.5,650.6 238.5,651.8 242.6,659 246.6,673 250.7,680.7 254.8,679.4 258.8,668.1 262.9,662.6 266.9,658.8 271,662.6 275,677.7 279.1,690.1 283.1,693.1 287.2,685.3 291.3,674.7 295.3,675.4 299.4,680.8 303.4,687.5 307.5,680.8 311.5,673.2 315.6,681.7 319.7,692.1 323.7,691 327.8,678.3 331.8,662 335.9,653.4 339.9,646.3 344,649.6 348.1,652.6 352.1,657.6 356.2,655.9 360.2,660.5 364.3,657.9 368.3,669.7 372.4,674.7 376.4,684.6 380.5,690 384.6,694.6 388.6,694.5 392.7,686.5 396.7,671 400.8,660.6 404.8,651.9 408.9,650.8 413,652.6 417,659.3 421.1,673.8 425.1,685 429.2,685.6 433.2,675.9 437.3,667.9 441.4,662.5 445.4,657.9 449.5,652.4 453.5,650.7 457.6,660.1 461.6,666.1 465.7,672.5 469.7,673.7 473.8,670.3 477.9,663.5 481.9,654.2 486,652.6 490,654.9 494.1,658.8 498.1,664.6 502.2,662.2 506.3,656.4 510.3,648.2 514.4,647.7 518.4,651.7 522.5,653.2 526.5,652.5 530.6,662.9 534.7,673.5 538.7,693.1 542.8,693.5 546.8,696 550.9,686.3 554.9,688.1 559,693.3 563,700.1 567.1,702.4 571.2,697.6 575.2,692.4 579.3,677.1 583.3,662.1 587.4,660.1 591.4,667.7 595.5,683.1 599.6,689.6 603.6,699.3 607.7,694.8 611.7,691.1 615.8,680.8 619.8,683.4 623.9,683.7 628,689.9 632,692.9 636.1,692 640.1,675.9 644.2,660 648.2,647.9 652.3,651.2 656.3,650.6 660.4,652.7 664.5,658.1 668.5,676.3 672.6,690.4 676.6,696.5 680.7,690.8 684.7,694.8 688.8,700.1 692.9,699.6 696.9,695.7 701,695.6 705,699.9 709.1,695.4 713.1,681.4 717.2,667.3 721.3,665.1 725.3,679.1 729.4,694.9 733.4,702.5 737.5,690.2 741.5,674.2 745.6,656.8 749.6,651.4 753.7,658.1 757.8,662.7 761.8,660.5 765.9,651.5 769.9,650.1 774,654.1 778,663.1 782.1,669.7 786.2,666.3 790.2,657.5 794.3,650.9 798.3,649.8 802.4,649.8 806.4,648.4 810.5,652.1 814.5,663.7 818.6,681.9 822.7,690.7 826.7,699.1 830.8,691.3 834.8,680.6 838.9,670.8 842.9,666.4 847,667 851.1,660.2 855.1,670.8 859.2,688.5 863.2,693.5 867.3,683.3 871.3,669.8 875.4,673.8 879.5,674.1 883.5,667.8 887.6,658.5 891.6,652.5 895.7,652.5 899.7,650.4 903.8,652.3 907.8,655.1 911.9,660.7 916,675.6 920,685.3 924.1,681.1 928.1,666.6 932.2,666 936.2,668 940.3,668.4 944.4,656.5 948.4,655.4 952.5,658.7 956.5,673.1 960.6,672.4 964.6,666.8 968.7,651.4 972.8,661.3 976.8,675.7 980.9,688.8 984.9,693.3 989,693.8 993,684.4 997.1,687.1 1001.1,689.9 1005.2,704 1009.3,705 1013.3,705.2 1017.4,708.8 1021.4,706.2 1025.5,704.8 1029.5,698.2 1033.6,691.8 1037.7,674.1 1041.7,663.1 1045.8,656.5 1049.8,668.5 1053.9,676.5 1057.9,684.9 1062,691.8 1066.1,699.6 1070.1,700.6 1074.2,700.1 1078.2,699.3 1082.3,705.2 1086.3,700.9 1090.4,699.2 1094.4,683.3 1098.5,677.8 1102.6,672.1 1106.6,669.6 1110.7,671.2 1114.7,679.1 1118.8,692 1122.8,700.9 1126.9,701 1131,701.8 1135,698.6 1139.1,700 1143.1,701.2 1147.2,697.2 1151.2,697.8 1155.3,694.1 1159.4,683.6 1163.4,665.5 1163.4,657.3 3.2,657.3" fill="#2f4622"/><polygon clip-path="url(#f2r)" points="3.2,657.8 7.3,658.1 11.4,664.2 15.4,677.2 19.5,686.9 23.5,677.4 27.6,664.6 31.6,653.4 35.7,659.7 39.8,670.4 43.8,684.2 47.9,691.1 51.9,690.5 56,686.4 60,672.1 64.1,662.6 68.2,669.5 72.2,670.7 76.3,670.7 80.3,650.5 84.4,649.3 88.4,650.3 92.5,652.1 96.5,651.2 100.6,656.8 104.7,659.7 108.7,667.4 112.8,675.9 116.8,683.4 120.9,676.6 124.9,671.9 129,665.6 133.1,673.1 137.1,668.9 141.2,674.9 145.2,684.6 149.3,694.1 153.3,698.9 157.4,696.4 161.5,690 165.5,678.1 169.6,663.3 173.6,666.5 177.7,679.7 181.7,696.5 185.8,702.5 189.8,704.2 193.9,703.6 198,696.5 202,686.8 206.1,681.8 210.1,675.3 214.2,665 218.2,653.3 222.3,648.8 226.4,649.4 230.4,650.4 234.5,650.6 238.5,651.8 242.6,659 246.6,673 250.7,680.7 254.8,679.4 258.8,668.1 262.9,662.6 266.9,658.8 271,662.6 275,677.7 279.1,690.1 283.1,693.1 287.2,685.3 291.3,674.7 295.3,675.4 299.4,680.8 303.4,687.5 307.5,680.8 311.5,673.2 315.6,681.7 319.7,692.1 323.7,691 327.8,678.3 331.8,662 335.9,653.4 339.9,646.3 344,649.6 348.1,652.6 352.1,657.6 356.2,655.9 360.2,660.5 364.3,657.9 368.3,669.7 372.4,674.7 376.4,684.6 380.5,690 384.6,694.6 388.6,694.5 392.7,686.5 396.7,671 400.8,660.6 404.8,651.9 408.9,650.8 413,652.6 417,659.3 421.1,673.8 425.1,685 429.2,685.6 433.2,675.9 437.3,667.9 441.4,662.5 445.4,657.9 449.5,652.4 453.5,650.7 457.6,660.1 461.6,666.1 465.7,672.5 469.7,673.7 473.8,670.3 477.9,663.5 481.9,654.2 486,652.6 490,654.9 494.1,658.8 498.1,664.6 502.2,662.2 506.3,656.4 510.3,648.2 514.4,647.7 518.4,651.7 522.5,653.2 526.5,652.5 530.6,662.9 534.7,673.5 538.7,693.1 542.8,693.5 546.8,696 550.9,686.3 554.9,688.1 559,693.3 563,700.1 567.1,702.4 571.2,697.6 575.2,692.4 579.3,677.1 583.3,662.1 587.4,660.1 591.4,667.7 595.5,683.1 599.6,689.6 603.6,699.3 607.7,694.8 611.7,691.1 615.8,680.8 619.8,683.4 623.9,683.7 628,689.9 632,692.9 636.1,692 640.1,675.9 644.2,660 648.2,647.9 652.3,651.2 656.3,650.6 660.4,652.7 664.5,658.1 668.5,676.3 672.6,690.4 676.6,696.5 680.7,690.8 684.7,694.8 688.8,700.1 692.9,699.6 696.9,695.7 701,695.6 705,699.9 709.1,695.4 713.1,681.4 717.2,667.3 721.3,665.1 725.3,679.1 729.4,694.9 733.4,702.5 737.5,690.2 741.5,674.2 745.6,656.8 749.6,651.4 753.7,658.1 757.8,662.7 761.8,660.5 765.9,651.5 769.9,650.1 774,654.1 778,663.1 782.1,669.7 786.2,666.3 790.2,657.5 794.3,650.9 798.3,649.8 802.4,649.8 806.4,648.4 810.5,652.1 814.5,663.7 818.6,681.9 822.7,690.7 826.7,699.1 830.8,691.3 834.8,680.6 838.9,670.8 842.9,666.4 847,667 851.1,660.2 855.1,670.8 859.2,688.5 863.2,693.5 867.3,683.3 871.3,669.8 875.4,673.8 879.5,674.1 883.5,667.8 887.6,658.5 891.6,652.5 895.7,652.5 899.7,650.4 903.8,652.3 907.8,655.1 911.9,660.7 916,675.6 920,685.3 924.1,681.1 928.1,666.6 932.2,666 936.2,668 940.3,668.4 944.4,656.5 948.4,655.4 952.5,658.7 956.5,673.1 960.6,672.4 964.6,666.8 968.7,651.4 972.8,661.3 976.8,675.7 980.9,688.8 984.9,693.3 989,693.8 993,684.4 997.1,687.1 1001.1,689.9 1005.2,704 1009.3,705 1013.3,705.2 1017.4,708.8 1021.4,706.2 1025.5,704.8 1029.5,698.2 1033.6,691.8 1037.7,674.1 1041.7,663.1 1045.8,656.5 1049.8,668.5 1053.9,676.5 1057.9,684.9 1062,691.8 1066.1,699.6 1070.1,700.6 1074.2,700.1 1078.2,699.3 1082.3,705.2 1086.3,700.9 1090.4,699.2 1094.4,683.3 1098.5,677.8 1102.6,672.1 1106.6,669.6 1110.7,671.2 1114.7,679.1 1118.8,692 1122.8,700.9 1126.9,701 1131,701.8 1135,698.6 1139.1,700 1143.1,701.2 1147.2,697.2 1151.2,697.8 1155.3,694.1 1159.4,683.6 1163.4,665.5 1163.4,696.3 3.2,696.3" fill="#4e2a2a"/><line x1="2" y1="657.5" x2="1383" y2="657.5" stroke="#5aa82a" stroke-width="1" stroke-dasharray="1 2"/><line x1="2" y1="696.5" x2="1383" y2="696.5" stroke="#c04040" stroke-width="1" stroke-dasharray="1 2"/><polyline points="3.2,657.8 7.3,658.1 11.4,664.2 15.4,677.2 19.5,686.9 23.5,677.4 27.6,664.6 31.6,653.4 35.7,659.7 39.8,670.4 43.8,684.2 47.9,691.1 51.9,690.5 56,686.4 60,672.1 64.1,662.6 68.2,669.5 72.2,670.7 76.3,670.7 80.3,650.5 84.4,649.3 88.4,650.3 92.5,652.1 96.5,651.2 100.6,656.8 104.7,659.7 108.7,667.4 112.8,675.9 116.8,683.4 120.9,676.6 124.9,671.9 129,665.6 133.1,673.1 137.1,668.9 141.2,674.9 145.2,684.6 149.3,694.1 153.3,698.9 157.4,696.4 161.5,690 165.5,678.1 169.6,663.3 173.6,666.5 177.7,679.7 181.7,696.5 185.8,702.5 189.8,704.2 193.9,703.6 198,696.5 202,686.8 206.1,681.8 210.1,675.3 214.2,665 218.2,653.3 222.3,648.8 226.4,649.4 230.4,650.4 234.5,650.6 238.5,651.8 242.6,659 246.6,673 250.7,680.7 254.8,679.4 258.8,668.1 262.9,662.6 266.9,658.8 271,662.6 275,677.7 279.1,690.1 283.1,693.1 287.2,685.3 291.3,674.7 295.3,675.4 299.4,680.8 303.4,687.5 307.5,680.8 311.5,673.2 315.6,681.7 319.7,692.1 323.7,691 327.8,678.3 331.8,662 335.9,653.4 339.9,646.3 344,649.6 348.1,652.6 352.1,657.6 356.2,655.9 360.2,660.5 364.3,657.9 368.3,669.7 372.4,674.7 376.4,684.6 380.5,690 384.6,694.6 388.6,694.5 392.7,686.5 396.7,671 400.8,660.6 404.8,651.9 408.9,650.8 413,652.6 417,659.3 421.1,673.8 425.1,685 429.2,685.6 433.2,675.9 437.3,667.9 441.4,662.5 445.4,657.9 449.5,652.4 453.5,650.7 457.6,660.1 461.6,666.1 465.7,672.5 469.7,673.7 473.8,670.3 477.9,663.5 481.9,654.2 486,652.6 490,654.9 494.1,658.8 498.1,664.6 502.2,662.2 506.3,656.4 510.3,648.2 514.4,647.7 518.4,651.7 522.5,653.2 526.5,652.5 530.6,662.9 534.7,673.5 538.7,693.1 542.8,693.5 546.8,696 550.9,686.3 554.9,688.1 559,693.3 563,700.1 567.1,702.4 571.2,697.6 575.2,692.4 579.3,677.1 583.3,662.1 587.4,660.1 591.4,667.7 595.5,683.1 599.6,689.6 603.6,699.3 607.7,694.8 611.7,691.1 615.8,680.8 619.8,683.4 623.9,683.7 628,689.9 632,692.9 636.1,692 640.1,675.9 644.2,660 648.2,647.9 652.3,651.2 656.3,650.6 660.4,652.7 664.5,658.1 668.5,676.3 672.6,690.4 676.6,696.5 680.7,690.8 684.7,694.8 688.8,700.1 692.9,699.6 696.9,695.7 701,695.6 705,699.9 709.1,695.4 713.1,681.4 717.2,667.3 721.3,665.1 725.3,679.1 729.4,694.9 733.4,702.5 737.5,690.2 741.5,674.2 745.6,656.8 749.6,651.4 753.7,658.1 757.8,662.7 761.8,660.5 765.9,651.5 769.9,650.1 774,654.1 778,663.1 782.1,669.7 786.2,666.3 790.2,657.5 794.3,650.9 798.3,649.8 802.4,649.8 806.4,648.4 810.5,652.1 814.5,663.7 818.6,681.9 822.7,690.7 826.7,699.1 830.8,691.3 834.8,680.6 838.9,670.8 842.9,666.4 847,667 851.1,660.2 855.1,670.8 859.2,688.5 863.2,693.5 867.3,683.3 871.3,669.8 875.4,673.8 879.5,674.1 883.5,667.8 887.6,658.5 891.6,652.5 895.7,652.5 899.7,650.4 903.8,652.3 907.8,655.1 911.9,660.7 916,675.6 920,685.3 924.1,681.1 928.1,666.6 932.2,666 936.2,668 940.3,668.4 944.4,656.5 948.4,655.4 952.5,658.7 956.5,673.1 960.6,672.4 964.6,666.8 968.7,651.4 972.8,661.3 976.8,675.7 980.9,688.8 984.9,693.3 989,693.8 993,684.4 997.1,687.1 1001.1,689.9 1005.2,704 1009.3,705 1013.3,705.2 1017.4,708.8 1021.4,706.2 1025.5,704.8 1029.5,698.2 1033.6,691.8 1037.7,674.1 1041.7,663.1 1045.8,656.5 1049.8,668.5 1053.9,676.5 1057.9,684.9 1062,691.8 1066.1,699.6 1070.1,700.6 1074.2,700.1 1078.2,699.3 1082.3,705.2 1086.3,700.9 1090.4,699.2 1094.4,683.3 1098.5,677.8 1102.6,672.1 1106.6,669.6 1110.7,671.2 1114.7,679.1 1118.8,692 1122.8,700.9 1126.9,701 1131,701.8 1135,698.6 1139.1,700 1143.1,701.2 1147.2,697.2 1151.2,697.8 1155.3,694.1 1159.4,683.6 1163.4,665.5" fill="none" stroke="#7a6a9c" stroke-width="2.3" stroke-linejoin="round"/><polyline points="3.2,661.4 7.3,659.6 11.4,660 15.4,666.5 19.5,676.1 23.5,680.5 27.6,676.3 31.6,665.1 35.7,659.2 39.8,661.2 43.8,671.4 47.9,681.9 51.9,688.6 56,689.3 60,683 64.1,673.7 68.2,668.1 72.2,667.6 76.3,670.3 80.3,664 84.4,656.9 88.4,650.1 92.5,650.6 96.5,651.2 100.6,653.4 104.7,655.9 108.7,661.3 112.8,667.6 116.8,675.6 120.9,678.6 124.9,677.3 129,671.4 133.1,670.2 137.1,669.2 141.2,672.3 145.2,676.1 149.3,684.5 153.3,692.5 157.4,696.5 161.5,695.1 165.5,688.2 169.6,677.1 173.6,669.3 177.7,669.8 181.7,680.9 185.8,692.9 189.8,701.1 193.9,703.4 198,701.4 202,695.6 206.1,688.4 210.1,681.3 214.2,674 218.2,664.5 222.3,655.7 226.4,650.5 230.4,649.5 234.5,650.1 238.5,650.9 242.6,653.8 246.6,661.3 250.7,670.9 254.8,677.7 258.8,676 262.9,670 266.9,663.2 271,661.3 275,666.4 279.1,676.8 283.1,687 287.2,689.5 291.3,684.4 295.3,678.5 299.4,677 303.4,681.2 307.5,683 311.5,680.5 315.6,678.5 319.7,682.3 323.7,688.3 327.8,687.1 331.8,677.1 335.9,664.6 339.9,653.9 344,649.8 348.1,649.5 352.1,653.3 356.2,655.4 360.2,658 364.3,658.1 368.3,662.7 372.4,667.4 376.4,676.4 380.5,683.1 384.6,689.7 388.6,693 392.7,691.9 396.7,684 400.8,672.7 404.8,661.2 408.9,654.5 413,651.8 417,654.2 421.1,661.9 425.1,672.7 429.2,681.4 433.2,682.1 437.3,676.4 441.4,668.8 445.4,662.8 449.5,657.6 453.5,653.7 457.6,654.4 461.6,659 465.7,666.2 469.7,670.7 473.8,672.1 477.9,669.2 481.9,662.7 486,656.8 490,653.9 494.1,655.4 498.1,659.4 502.2,661.9 506.3,661.1 510.3,655.6 514.4,650.8 518.4,649.2 522.5,650.9 526.5,652.5 530.6,656.2 534.7,663 538.7,676.5 542.8,686.7 546.8,694.2 550.9,692 554.9,690.1 559,689.2 563,693.8 567.1,698.6 571.2,700.1 575.2,697.5 579.3,689 583.3,677.2 587.4,666.4 591.4,663.3 595.5,670.3 599.6,680.1 603.6,690.7 607.7,694.5 611.7,695 615.8,688.9 619.8,685.1 623.9,682.6 628,685.6 632,688.8 636.1,691.6 640.1,686.9 644.2,676 648.2,661.3 652.3,653 656.3,649.9 660.4,651.5 664.5,653.8 668.5,662.4 672.6,674.9 676.6,687.7 680.7,692.5 684.7,694 688.8,695.2 692.9,698.1 696.9,698.5 701,697 705,697.1 709.1,696.9 713.1,692.2 717.2,681.4 721.3,671.3 725.3,670.5 729.4,679.7 733.4,692.2 737.5,695.9 741.5,689 745.6,673.7 749.6,660.8 753.7,655.4 757.8,657.4 761.8,660.4 765.9,658.2 769.9,654 774,651.9 778,655.8 782.1,662.3 786.2,666.3 790.2,664.5 794.3,658.2 798.3,652.7 802.4,650.1 806.4,649.3 810.5,650.1 814.5,654.7 818.6,665.9 822.7,678.8 826.7,690.6 830.8,693.7 834.8,690.4 838.9,680.9 842.9,672.6 847,668 851.1,664.5 855.1,666 859.2,673.2 863.2,684.3 867.3,688.4 871.3,682.2 875.4,675.6 879.5,672.5 883.5,671.9 887.6,666.8 891.6,659.6 895.7,654.5 899.7,651.8 903.8,651.7 907.8,652.6 911.9,656 916,663.8 920,673.9 924.1,680.6 928.1,677.6 932.2,671.2 936.2,666.8 940.3,667.4 944.4,664.3 948.4,660.1 952.5,656.9 956.5,662.4 960.6,668.1 964.6,670.8 968.7,663.5 972.8,659.8 976.8,662.8 980.9,675.3 984.9,685.9 989,691.9 993,690.5 997.1,688.4 1001.1,687.1 1005.2,693.6 1009.3,699.6 1013.3,704.7 1017.4,706.3 1021.4,706.7 1025.5,706.6 1029.5,703.1 1033.6,698.3 1037.7,688 1041.7,676.3 1045.8,664.6 1049.8,662.7 1053.9,667.2 1057.9,676.7 1062,684.4 1066.1,692.1 1070.1,697.3 1074.2,700.1 1078.2,700 1082.3,701.5 1086.3,701.8 1090.4,701.8 1094.4,694.5 1098.5,686.8 1102.6,677.7 1106.6,673.2 1110.7,671 1114.7,673.3 1118.8,680.8 1122.8,690.7 1126.9,697.9 1131,701.2 1135,700.5 1139.1,700.1 1143.1,699.9 1147.2,699.5 1151.2,698.7 1155.3,696.4 1159.4,691.8 1163.4,681.1" fill="none" stroke="#a84ca8" stroke-width="2.3" stroke-linejoin="round"/></g><g clip-path="url(#c3)"><clipPath id="f3g"><rect x="2" y="716" width="1381" height="17.5"/></clipPath><clipPath id="f3r"><rect x="2" y="754.3" width="1381" height="17.700000000000045"/></clipPath><polygon clip-path="url(#f3g)" points="3.2,719.2 7.3,728.4 11.4,734.1 15.4,736.5 19.5,735.9 23.5,730.6 27.6,727.7 31.6,726.5 35.7,733.3 39.8,738.3 43.8,743.2 47.9,740.8 51.9,738.2 56,743.2 60,737.1 64.1,735.8 68.2,748.7 72.2,739.9 76.3,737.9 80.3,734.5 84.4,731.5 88.4,734.1 92.5,732.8 96.5,730.7 100.6,734.2 104.7,732.5 108.7,734.7 112.8,737.4 116.8,736.3 120.9,731.8 124.9,736.4 129,733.4 133.1,735.4 137.1,734.8 141.2,736.3 145.2,741 149.3,745.4 153.3,745 157.4,743.3 161.5,739.6 165.5,736.9 169.6,731.7 173.6,744 177.7,745.5 181.7,743.8 185.8,748.8 189.8,751.6 193.9,750.1 198,747.9 202,745.9 206.1,747.8 210.1,744.8 214.2,739.6 218.2,736.5 222.3,736.4 226.4,734.7 230.4,734.2 234.5,731.3 238.5,730.4 242.6,730 246.6,741.2 250.7,735.6 254.8,734.4 258.8,733.5 262.9,733.1 266.9,732.6 271,731.8 275,754.7 279.1,749.8 283.1,745.7 287.2,745.2 291.3,741.5 295.3,748.6 299.4,750.7 303.4,746.9 307.5,743.3 311.5,746 315.6,750.9 319.7,749.5 323.7,745.1 327.8,744.6 331.8,741.6 335.9,739.2 339.9,738.8 344,738.3 348.1,737.9 352.1,736.7 356.2,734.5 360.2,738.2 364.3,735.5 368.3,740.9 372.4,739.9 376.4,739.5 380.5,742.7 384.6,745.9 388.6,741.7 392.7,740.4 396.7,734.3 400.8,732.9 404.8,732.1 408.9,728.6 413,725 417,731.9 421.1,739.1 425.1,740.9 429.2,736.3 433.2,735.2 437.3,738.2 441.4,733.4 445.4,729.5 449.5,728.5 453.5,729.2 457.6,736.8 461.6,735 465.7,734.7 469.7,736.8 473.8,731 477.9,727.8 481.9,727.6 486,727 490,730.3 494.1,729.9 498.1,729.7 502.2,726.5 506.3,723.6 510.3,722.6 514.4,722.1 518.4,726.9 522.5,725.8 526.5,724 530.6,735.9 534.7,735.1 538.7,745.1 542.8,741.8 546.8,742 550.9,740.6 554.9,744.8 559,748.5 563,748.8 567.1,750.5 571.2,747.6 575.2,749.1 579.3,746 583.3,741.3 587.4,746.9 591.4,747.4 595.5,749.2 599.6,752.1 603.6,757.3 607.7,750.3 611.7,751.7 615.8,751.8 619.8,754.1 623.9,754.8 628,756.1 632,756.1 636.1,754.3 640.1,743.9 644.2,738.2 648.2,736.8 652.3,736.8 656.3,731.5 660.4,732.3 664.5,737.9 668.5,745.9 672.6,744.4 676.6,743.7 680.7,742.3 684.7,751.1 688.8,754.2 692.9,747.6 696.9,749.7 701,753.4 705,754.3 709.1,750.6 713.1,746.6 717.2,746.2 721.3,749.7 725.3,751.9 729.4,750.7 733.4,752 737.5,746.3 741.5,744.7 745.6,739.3 749.6,739.2 753.7,743.8 757.8,740.2 761.8,735.1 765.9,732.9 769.9,734.3 774,735.1 778,738.1 782.1,739.3 786.2,734.3 790.2,732.9 794.3,732.2 798.3,729.1 802.4,728.2 806.4,727.9 810.5,729.5 814.5,735.6 818.6,739.4 822.7,738 826.7,743.8 830.8,740.1 834.8,737 838.9,741.6 842.9,740.4 847,738.3 851.1,736.8 855.1,745.8 859.2,750.5 863.2,743.5 867.3,743.2 871.3,742.4 875.4,747.5 879.5,744.1 883.5,739.2 887.6,738 891.6,737.3 895.7,733.6 899.7,732.8 903.8,734.8 907.8,734.2 911.9,736.3 916,740.8 920,739.4 924.1,735.7 928.1,734.8 932.2,742.6 936.2,737.9 940.3,738.6 944.4,734 948.4,735.7 952.5,739 956.5,743.9 960.6,736 964.6,735.3 968.7,729.8 972.8,741.5 976.8,744.1 980.9,740.5 984.9,743.4 989,743.9 993,738.2 997.1,745.1 1001.1,748.5 1005.2,746.4 1009.3,750.4 1013.3,754.3 1017.4,754.8 1021.4,755.2 1025.5,755.8 1029.5,752.1 1033.6,753 1037.7,746.6 1041.7,744.5 1045.8,745.5 1049.8,748.7 1053.9,745.8 1057.9,744.5 1062,748.3 1066.1,751.2 1070.1,748.9 1074.2,752.8 1078.2,751.2 1082.3,752.7 1086.3,751.4 1090.4,752.6 1094.4,747.4 1098.5,748.8 1102.6,749.1 1106.6,741.1 1110.7,745.3 1114.7,747.9 1118.8,745.6 1122.8,753.8 1126.9,756.8 1131,752.9 1135,754.3 1139.1,757.3 1143.1,757.3 1147.2,755.2 1151.2,758.9 1155.3,752.2 1159.4,747.9 1163.4,747.1 1163.4,733.5 3.2,733.5" fill="#2f4622"/><polygon clip-path="url(#f3r)" points="3.2,719.2 7.3,728.4 11.4,734.1 15.4,736.5 19.5,735.9 23.5,730.6 27.6,727.7 31.6,726.5 35.7,733.3 39.8,738.3 43.8,743.2 47.9,740.8 51.9,738.2 56,743.2 60,737.1 64.1,735.8 68.2,748.7 72.2,739.9 76.3,737.9 80.3,734.5 84.4,731.5 88.4,734.1 92.5,732.8 96.5,730.7 100.6,734.2 104.7,732.5 108.7,734.7 112.8,737.4 116.8,736.3 120.9,731.8 124.9,736.4 129,733.4 133.1,735.4 137.1,734.8 141.2,736.3 145.2,741 149.3,745.4 153.3,745 157.4,743.3 161.5,739.6 165.5,736.9 169.6,731.7 173.6,744 177.7,745.5 181.7,743.8 185.8,748.8 189.8,751.6 193.9,750.1 198,747.9 202,745.9 206.1,747.8 210.1,744.8 214.2,739.6 218.2,736.5 222.3,736.4 226.4,734.7 230.4,734.2 234.5,731.3 238.5,730.4 242.6,730 246.6,741.2 250.7,735.6 254.8,734.4 258.8,733.5 262.9,733.1 266.9,732.6 271,731.8 275,754.7 279.1,749.8 283.1,745.7 287.2,745.2 291.3,741.5 295.3,748.6 299.4,750.7 303.4,746.9 307.5,743.3 311.5,746 315.6,750.9 319.7,749.5 323.7,745.1 327.8,744.6 331.8,741.6 335.9,739.2 339.9,738.8 344,738.3 348.1,737.9 352.1,736.7 356.2,734.5 360.2,738.2 364.3,735.5 368.3,740.9 372.4,739.9 376.4,739.5 380.5,742.7 384.6,745.9 388.6,741.7 392.7,740.4 396.7,734.3 400.8,732.9 404.8,732.1 408.9,728.6 413,725 417,731.9 421.1,739.1 425.1,740.9 429.2,736.3 433.2,735.2 437.3,738.2 441.4,733.4 445.4,729.5 449.5,728.5 453.5,729.2 457.6,736.8 461.6,735 465.7,734.7 469.7,736.8 473.8,731 477.9,727.8 481.9,727.6 486,727 490,730.3 494.1,729.9 498.1,729.7 502.2,726.5 506.3,723.6 510.3,722.6 514.4,722.1 518.4,726.9 522.5,725.8 526.5,724 530.6,735.9 534.7,735.1 538.7,745.1 542.8,741.8 546.8,742 550.9,740.6 554.9,744.8 559,748.5 563,748.8 567.1,750.5 571.2,747.6 575.2,749.1 579.3,746 583.3,741.3 587.4,746.9 591.4,747.4 595.5,749.2 599.6,752.1 603.6,757.3 607.7,750.3 611.7,751.7 615.8,751.8 619.8,754.1 623.9,754.8 628,756.1 632,756.1 636.1,754.3 640.1,743.9 644.2,738.2 648.2,736.8 652.3,736.8 656.3,731.5 660.4,732.3 664.5,737.9 668.5,745.9 672.6,744.4 676.6,743.7 680.7,742.3 684.7,751.1 688.8,754.2 692.9,747.6 696.9,749.7 701,753.4 705,754.3 709.1,750.6 713.1,746.6 717.2,746.2 721.3,749.7 725.3,751.9 729.4,750.7 733.4,752 737.5,746.3 741.5,744.7 745.6,739.3 749.6,739.2 753.7,743.8 757.8,740.2 761.8,735.1 765.9,732.9 769.9,734.3 774,735.1 778,738.1 782.1,739.3 786.2,734.3 790.2,732.9 794.3,732.2 798.3,729.1 802.4,728.2 806.4,727.9 810.5,729.5 814.5,735.6 818.6,739.4 822.7,738 826.7,743.8 830.8,740.1 834.8,737 838.9,741.6 842.9,740.4 847,738.3 851.1,736.8 855.1,745.8 859.2,750.5 863.2,743.5 867.3,743.2 871.3,742.4 875.4,747.5 879.5,744.1 883.5,739.2 887.6,738 891.6,737.3 895.7,733.6 899.7,732.8 903.8,734.8 907.8,734.2 911.9,736.3 916,740.8 920,739.4 924.1,735.7 928.1,734.8 932.2,742.6 936.2,737.9 940.3,738.6 944.4,734 948.4,735.7 952.5,739 956.5,743.9 960.6,736 964.6,735.3 968.7,729.8 972.8,741.5 976.8,744.1 980.9,740.5 984.9,743.4 989,743.9 993,738.2 997.1,745.1 1001.1,748.5 1005.2,746.4 1009.3,750.4 1013.3,754.3 1017.4,754.8 1021.4,755.2 1025.5,755.8 1029.5,752.1 1033.6,753 1037.7,746.6 1041.7,744.5 1045.8,745.5 1049.8,748.7 1053.9,745.8 1057.9,744.5 1062,748.3 1066.1,751.2 1070.1,748.9 1074.2,752.8 1078.2,751.2 1082.3,752.7 1086.3,751.4 1090.4,752.6 1094.4,747.4 1098.5,748.8 1102.6,749.1 1106.6,741.1 1110.7,745.3 1114.7,747.9 1118.8,745.6 1122.8,753.8 1126.9,756.8 1131,752.9 1135,754.3 1139.1,757.3 1143.1,757.3 1147.2,755.2 1151.2,758.9 1155.3,752.2 1159.4,747.9 1163.4,747.1 1163.4,754.3 3.2,754.3" fill="#4e2a2a"/><line x1="2" y1="733.5" x2="1383" y2="733.5" stroke="#5aa82a" stroke-width="1" stroke-dasharray="1 2"/><line x1="2" y1="754.5" x2="1383" y2="754.5" stroke="#c04040" stroke-width="1" stroke-dasharray="1 2"/><polyline points="3.2,719.2 7.3,728.4 11.4,734.1 15.4,736.5 19.5,735.9 23.5,730.6 27.6,727.7 31.6,726.5 35.7,733.3 39.8,738.3 43.8,743.2 47.9,740.8 51.9,738.2 56,743.2 60,737.1 64.1,735.8 68.2,748.7 72.2,739.9 76.3,737.9 80.3,734.5 84.4,731.5 88.4,734.1 92.5,732.8 96.5,730.7 100.6,734.2 104.7,732.5 108.7,734.7 112.8,737.4 116.8,736.3 120.9,731.8 124.9,736.4 129,733.4 133.1,735.4 137.1,734.8 141.2,736.3 145.2,741 149.3,745.4 153.3,745 157.4,743.3 161.5,739.6 165.5,736.9 169.6,731.7 173.6,744 177.7,745.5 181.7,743.8 185.8,748.8 189.8,751.6 193.9,750.1 198,747.9 202,745.9 206.1,747.8 210.1,744.8 214.2,739.6 218.2,736.5 222.3,736.4 226.4,734.7 230.4,734.2 234.5,731.3 238.5,730.4 242.6,730 246.6,741.2 250.7,735.6 254.8,734.4 258.8,733.5 262.9,733.1 266.9,732.6 271,731.8 275,754.7 279.1,749.8 283.1,745.7 287.2,745.2 291.3,741.5 295.3,748.6 299.4,750.7 303.4,746.9 307.5,743.3 311.5,746 315.6,750.9 319.7,749.5 323.7,745.1 327.8,744.6 331.8,741.6 335.9,739.2 339.9,738.8 344,738.3 348.1,737.9 352.1,736.7 356.2,734.5 360.2,738.2 364.3,735.5 368.3,740.9 372.4,739.9 376.4,739.5 380.5,742.7 384.6,745.9 388.6,741.7 392.7,740.4 396.7,734.3 400.8,732.9 404.8,732.1 408.9,728.6 413,725 417,731.9 421.1,739.1 425.1,740.9 429.2,736.3 433.2,735.2 437.3,738.2 441.4,733.4 445.4,729.5 449.5,728.5 453.5,729.2 457.6,736.8 461.6,735 465.7,734.7 469.7,736.8 473.8,731 477.9,727.8 481.9,727.6 486,727 490,730.3 494.1,729.9 498.1,729.7 502.2,726.5 506.3,723.6 510.3,722.6 514.4,722.1 518.4,726.9 522.5,725.8 526.5,724 530.6,735.9 534.7,735.1 538.7,745.1 542.8,741.8 546.8,742 550.9,740.6 554.9,744.8 559,748.5 563,748.8 567.1,750.5 571.2,747.6 575.2,749.1 579.3,746 583.3,741.3 587.4,746.9 591.4,747.4 595.5,749.2 599.6,752.1 603.6,757.3 607.7,750.3 611.7,751.7 615.8,751.8 619.8,754.1 623.9,754.8 628,756.1 632,756.1 636.1,754.3 640.1,743.9 644.2,738.2 648.2,736.8 652.3,736.8 656.3,731.5 660.4,732.3 664.5,737.9 668.5,745.9 672.6,744.4 676.6,743.7 680.7,742.3 684.7,751.1 688.8,754.2 692.9,747.6 696.9,749.7 701,753.4 705,754.3 709.1,750.6 713.1,746.6 717.2,746.2 721.3,749.7 725.3,751.9 729.4,750.7 733.4,752 737.5,746.3 741.5,744.7 745.6,739.3 749.6,739.2 753.7,743.8 757.8,740.2 761.8,735.1 765.9,732.9 769.9,734.3 774,735.1 778,738.1 782.1,739.3 786.2,734.3 790.2,732.9 794.3,732.2 798.3,729.1 802.4,728.2 806.4,727.9 810.5,729.5 814.5,735.6 818.6,739.4 822.7,738 826.7,743.8 830.8,740.1 834.8,737 838.9,741.6 842.9,740.4 847,738.3 851.1,736.8 855.1,745.8 859.2,750.5 863.2,743.5 867.3,743.2 871.3,742.4 875.4,747.5 879.5,744.1 883.5,739.2 887.6,738 891.6,737.3 895.7,733.6 899.7,732.8 903.8,734.8 907.8,734.2 911.9,736.3 916,740.8 920,739.4 924.1,735.7 928.1,734.8 932.2,742.6 936.2,737.9 940.3,738.6 944.4,734 948.4,735.7 952.5,739 956.5,743.9 960.6,736 964.6,735.3 968.7,729.8 972.8,741.5 976.8,744.1 980.9,740.5 984.9,743.4 989,743.9 993,738.2 997.1,745.1 1001.1,748.5 1005.2,746.4 1009.3,750.4 1013.3,754.3 1017.4,754.8 1021.4,755.2 1025.5,755.8 1029.5,752.1 1033.6,753 1037.7,746.6 1041.7,744.5 1045.8,745.5 1049.8,748.7 1053.9,745.8 1057.9,744.5 1062,748.3 1066.1,751.2 1070.1,748.9 1074.2,752.8 1078.2,751.2 1082.3,752.7 1086.3,751.4 1090.4,752.6 1094.4,747.4 1098.5,748.8 1102.6,749.1 1106.6,741.1 1110.7,745.3 1114.7,747.9 1118.8,745.6 1122.8,753.8 1126.9,756.8 1131,752.9 1135,754.3 1139.1,757.3 1143.1,757.3 1147.2,755.2 1151.2,758.9 1155.3,752.2 1159.4,747.9 1163.4,747.1" fill="none" stroke="#6a9a4a" stroke-width="2.3" stroke-linejoin="round"/></g><g clip-path="url(#c4)"><path d="M2 806.1h3v1h-3zM6 806.2h3v1h-3zM10 806.2h3v1h-3zM14 806.2h3v1h-3zM18 806.2h3v1h-3zM23 806.2h3v1h-3zM27 806.2h3v1h-3zM31 806.2h3v1h-3zM35 806.2h3v1h-3zM39 806.2h3v1h-3zM43 806.2h3v1h-3zM47 806.2h3v1h-3zM51 806.2h3v1h-3zM55 806.2h3v1h-3zM59 806.2h3v1h-3zM63 806.2h3v1h-3zM67 806.2h3v1.1h-3zM71 806.2h3v1h-3zM75 806.2h3v1h-3zM79 806.2h3v1h-3zM83 805.6h3v1.1h-3zM87 805.4h3v1.3h-3zM91 805.1h3v1.6h-3zM96 804.8h3v1.9h-3zM100 804.9h3v1.8h-3zM104 804.9h3v1.8h-3zM108 805.2h3v1.5h-3zM112 805.7h3v1h-3zM116 806h3v1h-3zM120 805.8h3v1h-3zM124 806h3v1h-3zM128 805.9h3v1h-3zM132 806.1h3v1h-3zM136 806.2h3v1h-3zM140 806.2h3v1h-3zM144 806.2h3v1h-3zM148 806.2h3v1h-3zM152 806.2h3v1.5h-3zM156 806.2h3v1.6h-3zM160 806.2h3v1.5h-3zM165 806.2h3v1.2h-3zM169 806.2h3v1h-3zM173 806.2h3v1h-3zM177 806.2h3v1.3h-3zM181 806.2h3v1.4h-3zM185 806.2h3v1.9h-3zM189 806.2h3v2.5h-3zM193 806.2h3v2.7h-3zM197 806.2h3v2.6h-3zM201 806.2h3v2.3h-3zM205 806.2h3v2.2h-3zM209 806.2h3v1.8h-3zM213 806.2h3v1.1h-3zM217 806.2h3v1h-3zM221 806.2h3v1h-3zM225 806.1h3v1h-3zM229 805.9h3v1h-3zM233 805.4h3v1.3h-3zM238 805.2h3v1.5h-3zM242 805.1h3v1.6h-3zM246 805.6h3v1.1h-3zM250 805.5h3v1.2h-3zM254 805.5h3v1.2h-3zM258 805.4h3v1.3h-3zM262 805.5h3v1.2h-3zM266 805.6h3v1.1h-3zM270 805.7h3v1h-3zM274 806.2h3v1h-3zM278 806.2h3v1.7h-3zM282 806.2h3v1.8h-3zM286 806.2h3v1.7h-3zM290 806.2h3v1.3h-3zM294 806.2h3v1.8h-3zM298 806.2h3v2.3h-3zM302 806.2h3v2.2h-3zM306 806.2h3v1.7h-3zM311 806.2h3v1.6h-3zM315 806.2h3v2.1h-3zM319 806.2h3v2.2h-3zM323 806.2h3v1.7h-3zM327 806.2h3v1.3h-3zM331 806.2h3v1h-3zM335 806.2h3v1h-3zM339 806.1h3v1h-3zM343 805.7h3v1h-3zM347 805.5h3v1.2h-3zM351 805.4h3v1.3h-3zM355 805.1h3v1.6h-3zM359 805.2h3v1.5h-3zM363 805.1h3v1.6h-3zM367 805.5h3v1.2h-3zM371 805.7h3v1h-3zM375 805.9h3v1h-3zM380 806.2h3v1h-3zM384 806.2h3v1h-3zM388 806.2h3v1h-3zM392 806.2h3v1h-3zM396 806.2h3v1h-3zM400 805.8h3v1h-3zM404 805.6h3v1.1h-3zM408 805.1h3v1.6h-3zM412 804h3v2.7h-3zM416 803.9h3v2.8h-3zM420 804.6h3v2.1h-3zM424 805.3h3v1.4h-3zM428 805.3h3v1.4h-3zM432 805.3h3v1.4h-3zM436 805.6h3v1.1h-3zM440 805.2h3v1.5h-3zM444 804.3h3v2.4h-3zM448 803.6h3v3.1h-3zM453 803.5h3v3.2h-3zM457 804.2h3v2.5h-3zM461 804.6h3v2.1h-3zM465 805h3v1.7h-3zM469 805.6h3v1.1h-3zM473 805.1h3v1.6h-3zM477 804.1h3v2.6h-3zM481 803.6h3v3.1h-3zM485 803.4h3v3.3h-3zM489 803.7h3v3h-3zM493 804.2h3v2.5h-3zM497 804.7h3v2h-3zM501 804.4h3v2.3h-3zM505 803.1h3v3.6h-3zM509 801.8h3v4.9h-3zM513 800.9h3v5.8h-3zM517 801.2h3v5.5h-3zM521 801.4h3v5.3h-3zM526 800.8h3v5.9h-3zM530 802.4h3v4.3h-3zM534 803.7h3v3h-3zM538 806.2h3v1h-3zM542 806.2h3v1.4h-3zM546 806.2h3v2.5h-3zM550 806.2h3v2.9h-3zM554 806.2h3v4h-3zM558 806.2h3v5.6h-3zM562 806.2h3v6.5h-3zM566 806.2h3v7.3h-3zM570 806.2h3v7.2h-3zM574 806.2h3v7.2h-3zM578 806.2h3v6.5h-3zM582 806.2h3v5.2h-3zM586 806.2h3v5.1h-3zM590 806.2h3v4.9h-3zM594 806.2h3v5h-3zM599 806.2h3v5.5h-3zM603 806.2h3v7.1h-3zM607 806.2h3v6.8h-3zM611 806.2h3v6.6h-3zM615 806.2h3v6.2h-3zM619 806.2h3v6.3h-3zM623 806.2h3v6.1h-3zM627 806.2h3v6h-3zM631 806.2h3v5.6h-3zM635 806.2h3v4.9h-3zM639 806.2h3v2.9h-3zM643 806.2h3v1h-3zM647 805.2h3v1.5h-3zM651 804h3v2.7h-3zM655 801.9h3v4.8h-3zM659 800.9h3v5.8h-3zM663 801.2h3v5.5h-3zM668 802.9h3v3.8h-3zM672 803.9h3v2.8h-3zM676 804.6h3v2.1h-3zM680 804.9h3v1.8h-3zM684 806.2h3v1h-3zM688 806.2h3v2.1h-3zM692 806.2h3v2.3h-3zM696 806.2h3v2.7h-3zM700 806.2h3v4h-3zM704 806.2h3v4.8h-3zM708 806.2h3v4.5h-3zM712 806.2h3v3.4h-3zM716 806.2h3v2.3h-3zM720 806.2h3v2.2h-3zM724 806.2h3v2.5h-3zM728 806.2h3v2.3h-3zM732 806.2h3v2.3h-3zM736 806.2h3v1.3h-3zM741 806.2h3v1h-3zM745 805.4h3v1.3h-3zM749 804.4h3v2.3h-3zM753 804.4h3v2.3h-3zM757 803.8h3v2.9h-3zM761 802.5h3v4.2h-3zM765 801.2h3v5.5h-3zM769 800.8h3v5.9h-3zM773 800.9h3v5.8h-3zM777 801.6h3v5.1h-3zM781 802.4h3v4.3h-3zM785 802.2h3v4.5h-3zM789 802h3v4.7h-3zM793 802h3v4.7h-3zM797 801.4h3v5.3h-3zM801 801.1h3v5.6h-3zM805 801.1h3v5.6h-3zM809 801.6h3v5.1h-3zM814 802.7h3v4h-3zM818 804.1h3v2.6h-3zM822 805h3v1.7h-3zM826 806.2h3v1h-3zM830 806.2h3v1h-3zM834 806.2h3v1h-3zM838 806.2h3v1h-3zM842 806.2h3v1h-3zM846 806.2h3v1h-3zM850 806.2h3v1h-3zM854 806.2h3v1.4h-3zM858 806.2h3v2.7h-3zM862 806.2h3v2.5h-3zM866 806.2h3v2.4h-3zM870 806.2h3v2.1h-3zM874 806.2h3v2.6h-3zM878 806.2h3v2.4h-3zM883 806.2h3v1.5h-3zM887 806.2h3v1h-3zM891 806.2h3v1h-3zM895 805.8h3v1h-3zM899 805.1h3v1.6h-3zM903 805h3v1.7h-3zM907 804.9h3v1.8h-3zM911 805.2h3v1.5h-3zM915 805.9h3v1h-3zM919 806.2h3v1h-3zM923 806.2h3v1h-3zM927 806.1h3v1h-3zM931 806.2h3v1h-3zM935 806.2h3v1h-3zM939 806.2h3v1h-3zM943 806.2h3v1h-3zM947 806.1h3v1h-3zM951 806.2h3v1h-3zM956 806.2h3v1h-3zM960 806.2h3v1h-3zM964 806.2h3v1h-3zM968 804.8h3v1.9h-3zM972 805.5h3v1.2h-3zM976 806.2h3v1h-3zM980 806.2h3v1h-3zM984 806.2h3v1h-3zM988 806.2h3v1.1h-3zM992 806.2h3v1h-3zM996 806.2h3v1.2h-3zM1000 806.2h3v2.5h-3zM1004 806.2h3v2.9h-3zM1008 806.2h3v4h-3zM1012 806.2h3v5.8h-3zM1016 806.2h3v6.8h-3zM1020 806.2h3v7.2h-3zM1024 806.2h3v7.3h-3zM1029 806.2h3v6.6h-3zM1033 806.2h3v5.9h-3zM1037 806.2h3v4.4h-3zM1041 806.2h3v2.9h-3zM1045 806.2h3v1.9h-3zM1049 806.2h3v1.6h-3zM1053 806.2h3v1h-3zM1057 806.2h3v1h-3zM1061 806.2h3v1h-3zM1065 806.2h3v1h-3zM1069 806.2h3v1h-3zM1073 806.2h3v1.1h-3zM1077 806.2h3v1.2h-3zM1081 806.2h3v1.3h-3zM1085 806.2h3v1.2h-3zM1089 806.2h3v1.1h-3zM1093 806.2h3v1h-3zM1098 806.2h3v1h-3zM1102 806.2h3v1h-3zM1106 805.8h3v1h-3zM1110 805.6h3v1.1h-3zM1114 805.7h3v1h-3zM1118 805.6h3v1.1h-3zM1122 806.2h3v1h-3zM1126 806.2h3v1.3h-3zM1130 806.2h3v1.6h-3zM1134 806.2h3v1.9h-3zM1138 806.2h3v2.7h-3zM1142 806.2h3v3h-3zM1146 806.2h3v2.7h-3zM1150 806.2h3v3.2h-3zM1154 806.2h3v2.7h-3zM1158 806.2h3v1.6h-3zM1162 806.2h3v1h-3z" fill="#7a6a2a"/><polyline points="3.2,799.7 7.3,799.7 11.4,799.9 15.4,800.2 19.5,800.5 23.5,800.4 27.6,800.1 31.6,799.7 35.7,799.7 39.8,800.1 43.8,800.6 47.9,801 51.9,801.2 56,801.6 60,801.6 64.1,801.5 68.2,802.4 72.2,802.3 76.3,802 80.3,801.3 84.4,800.2 88.4,799.6 92.5,799 96.5,798.2 100.6,797.9 104.7,797.4 108.7,797.3 112.8,797.6 116.8,797.7 120.9,797.3 124.9,797.4 129,797 133.1,797 137.1,797.1 141.2,797.3 145.2,797.9 149.3,798.9 153.3,799.7 157.4,800.2 161.5,800.5 165.5,800.5 169.6,799.9 173.6,800.5 177.7,801.2 181.7,801.7 185.8,802.7 189.8,803.9 193.9,804.8 198,805.4 202,805.6 206.1,806 210.1,806.1 214.2,805.7 218.2,805.1 222.3,804.5 226.4,803.9 230.4,803.5 234.5,802.7 238.5,802.1 242.6,801.6 246.6,801.8 250.7,801.5 254.8,801.1 258.8,800.7 262.9,800.5 266.9,800.3 271,800.1 275,802.3 279.1,803.5 283.1,804.1 287.2,804.5 291.3,804.3 295.3,805.2 299.4,806.4 303.4,806.8 307.5,806.7 311.5,807 315.6,808.1 319.7,808.7 323.7,808.7 327.8,808.6 331.8,808 335.9,807.3 339.9,806.6 344,806 348.1,805.6 352.1,805 356.2,804.4 360.2,804.1 364.3,803.7 368.3,803.7 372.4,803.6 376.4,803.6 380.5,803.8 384.6,804.2 388.6,804.3 392.7,804.3 396.7,803.7 400.8,803.1 404.8,802.6 408.9,801.7 413,800 417,799.2 421.1,799.3 425.1,799.6 429.2,799.3 433.2,798.9 437.3,799 441.4,798.2 445.4,796.7 449.5,795.2 453.5,794.3 457.6,794.4 461.6,794.2 465.7,794.2 469.7,794.5 473.8,793.7 477.9,792 481.9,790.7 486,789.6 490,789.3 494.1,789.1 498.1,789.1 502.2,788.3 506.3,786.1 510.3,783.6 514.4,781.2 518.4,780.2 522.5,779 526.5,776.9 530.6,777.5 534.7,778 538.7,781.1 542.8,782.8 546.8,784.4 550.9,785.6 554.9,787.7 559,790.6 563,793.2 567.1,795.9 571.2,797.6 575.2,799.4 579.3,800.3 583.3,800.2 587.4,801.4 591.4,802.5 595.5,803.9 599.6,805.7 603.6,809.1 607.7,810.5 611.7,812 615.8,813.1 619.8,814.7 623.9,816.1 628,817.6 632,818.6 636.1,819 640.1,817.8 644.2,815.4 648.2,813.1 652.3,811.2 656.3,808 660.4,805.5 664.5,804.5 668.5,805.2 672.6,805.5 676.6,805.6 680.7,805.5 684.7,807.4 688.8,810 692.9,810.7 696.9,811.9 701,814.1 705,816.1 709.1,816.9 713.1,816.6 717.2,816.2 721.3,816.7 725.3,817.6 729.4,818 733.4,818.5 737.5,817.9 741.5,817 745.6,815 749.6,813.4 753.7,812.8 757.8,811.5 761.8,809.1 765.9,806.5 769.9,804.6 774,803.3 778,802.6 782.1,802.4 786.2,801.1 790.2,799.7 794.3,798.5 798.3,796.6 802.4,794.9 806.4,793.5 810.5,792.7 814.5,792.8 818.6,793.5 822.7,794 826.7,795.2 830.8,795.7 834.8,795.6 838.9,796.3 842.9,796.8 847,796.9 851.1,796.8 855.1,798 859.2,800 863.2,800.5 867.3,800.9 871.3,801.2 875.4,802.3 879.5,802.7 883.5,802.1 887.6,801.5 891.6,800.9 895.7,799.7 899.7,798.6 903.8,798 907.8,797.6 911.9,797.5 916,798 920,798.2 924.1,798 928.1,797.8 932.2,798.4 936.2,798.3 940.3,798.5 944.4,797.8 948.4,797.6 952.5,797.8 956.5,798.6 960.6,798 964.6,797.5 968.7,795.6 972.8,796 976.8,797.1 980.9,797.2 984.9,797.9 989,798.7 993,798.1 997.1,799.2 1001.1,801.1 1005.2,802.2 1009.3,804.3 1013.3,807.5 1017.4,810.3 1021.4,812.5 1025.5,814.4 1029.5,815.3 1033.6,816.2 1037.7,815.8 1041.7,815 1045.8,814.4 1049.8,814.5 1053.9,814.1 1057.9,813.5 1062,813.5 1066.1,814.1 1070.1,814.2 1074.2,815 1078.2,815.4 1082.3,815.9 1086.3,816 1090.4,816.2 1094.4,815.8 1098.5,815.5 1102.6,815.3 1106.6,814.1 1110.7,813.6 1114.7,813.5 1118.8,813.1 1122.8,814.2 1126.9,815.8 1131,816.5 1135,817.3 1139.1,818.8 1143.1,819.8 1147.2,820.2 1151.2,821.6 1155.3,821.7 1159.4,821 1163.4,820.2" fill="none" stroke="#3fe6c6" stroke-width="2.2"/><polyline points="3.2,800.3 7.3,800.2 11.4,800.1 15.4,800.1 19.5,800.2 23.5,800.2 27.6,800.2 31.6,800.1 35.7,800 39.8,800 43.8,800.2 47.9,800.3 51.9,800.5 56,800.7 60,800.9 64.1,801 68.2,801.3 72.2,801.5 76.3,801.6 80.3,801.5 84.4,801.3 88.4,800.9 92.5,800.6 96.5,800.1 100.6,799.6 104.7,799.2 108.7,798.8 112.8,798.6 116.8,798.4 120.9,798.2 124.9,798 129,797.8 133.1,797.7 137.1,797.6 141.2,797.5 145.2,797.6 149.3,797.8 153.3,798.2 157.4,798.6 161.5,799 165.5,799.3 169.6,799.4 173.6,799.6 177.7,799.9 181.7,800.3 185.8,800.8 189.8,801.4 193.9,802.1 198,802.7 202,803.3 206.1,803.9 210.1,804.3 214.2,804.6 218.2,804.7 222.3,804.7 226.4,804.5 230.4,804.3 234.5,804 238.5,803.6 242.6,803.2 246.6,802.9 250.7,802.6 254.8,802.3 258.8,802 262.9,801.7 266.9,801.4 271,801.2 275,801.4 279.1,801.8 283.1,802.3 287.2,802.7 291.3,803 295.3,803.5 299.4,804.1 303.4,804.6 307.5,805 311.5,805.4 315.6,805.9 319.7,806.5 323.7,806.9 327.8,807.3 331.8,807.4 335.9,807.4 339.9,807.2 344,807 348.1,806.7 352.1,806.4 356.2,806 360.2,805.6 364.3,805.2 368.3,804.9 372.4,804.7 376.4,804.5 380.5,804.3 384.6,804.3 388.6,804.3 392.7,804.3 396.7,804.2 400.8,804 404.8,803.7 408.9,803.3 413,802.6 417,801.9 421.1,801.4 425.1,801 429.2,800.7 433.2,800.3 437.3,800.1 441.4,799.7 445.4,799.1 449.5,798.3 453.5,797.5 457.6,796.9 461.6,796.4 465.7,795.9 469.7,795.7 473.8,795.3 477.9,794.6 481.9,793.8 486,793 490,792.2 494.1,791.6 498.1,791.1 502.2,790.5 506.3,789.6 510.3,788.4 514.4,787 518.4,785.6 522.5,784.3 526.5,782.8 530.6,781.7 534.7,781 538.7,781 542.8,781.4 546.8,782 550.9,782.7 554.9,783.7 559,785.1 563,786.7 567.1,788.6 571.2,790.4 575.2,792.2 579.3,793.8 583.3,795.1 587.4,796.4 591.4,797.6 595.5,798.8 599.6,800.2 603.6,802 607.7,803.7 611.7,805.3 615.8,806.9 619.8,808.5 623.9,810 628,811.5 632,812.9 636.1,814.1 640.1,814.9 644.2,815 648.2,814.6 652.3,813.9 656.3,812.7 660.4,811.3 664.5,809.9 668.5,809 672.6,808.3 676.6,807.8 680.7,807.3 684.7,807.3 688.8,807.9 692.9,808.4 696.9,809.1 701,810.1 705,811.3 709.1,812.4 713.1,813.3 717.2,813.9 721.3,814.4 725.3,815.1 729.4,815.6 733.4,816.2 737.5,816.5 741.5,816.6 745.6,816.3 749.6,815.7 753.7,815.1 757.8,814.4 761.8,813.4 765.9,812 769.9,810.5 774,809.1 778,807.8 782.1,806.7 786.2,805.6 790.2,804.4 794.3,803.2 798.3,801.9 802.4,800.5 806.4,799.1 810.5,797.8 814.5,796.8 818.6,796.2 822.7,795.7 826.7,795.6 830.8,795.6 834.8,795.6 838.9,795.8 842.9,796 847,796.2 851.1,796.3 855.1,796.6 859.2,797.3 863.2,797.9 867.3,798.5 871.3,799.1 875.4,799.7 879.5,800.3 883.5,800.7 887.6,800.8 891.6,800.8 895.7,800.6 899.7,800.2 903.8,799.8 907.8,799.3 911.9,799 916,798.8 920,798.7 924.1,798.5 928.1,798.4 932.2,798.4 936.2,798.4 940.3,798.4 944.4,798.3 948.4,798.1 952.5,798.1 956.5,798.2 960.6,798.1 964.6,798 968.7,797.5 972.8,797.2 976.8,797.2 980.9,797.2 984.9,797.3 989,797.6 993,797.7 997.1,798 1001.1,798.6 1005.2,799.3 1009.3,800.3 1013.3,801.8 1017.4,803.5 1021.4,805.3 1025.5,807.1 1029.5,808.8 1033.6,810.2 1037.7,811.4 1041.7,812.1 1045.8,812.5 1049.8,812.9 1053.9,813.2 1057.9,813.2 1062,813.3 1066.1,813.5 1070.1,813.6 1074.2,813.9 1078.2,814.2 1082.3,814.5 1086.3,814.8 1090.4,815.1 1094.4,815.2 1098.5,815.3 1102.6,815.3 1106.6,815.1 1110.7,814.8 1114.7,814.5 1118.8,814.3 1122.8,814.2 1126.9,814.6 1131,815 1135,815.4 1139.1,816.1 1143.1,816.8 1147.2,817.5 1151.2,818.3 1155.3,819 1159.4,819.4 1163.4,819.5" fill="none" stroke="#ee1111" stroke-width="2.2"/></g><line x1="435.5" y1="68" x2="435.5" y2="825" stroke="#f0b400" stroke-width="1"/></svg><div class="a" style="left:7px;top:31px;width:24px;height:22px;background:#555555;"></div><div class="a" style="left:32px;top:31px;width:24px;height:22px;background:#555555;"></div><div class="a" style="left:57px;top:31px;width:24px;height:22px;background:#555555;"></div><div class="a" style="left:87px;top:31px;width:24px;height:22px;background:#555555;"></div><div class="a" style="left:112px;top:31px;width:24px;height:22px;background:#555555;"></div><div class="a" style="left:137px;top:31px;width:24px;height:22px;background:#555555;"></div><div class="a" style="left:162px;top:31px;width:24px;height:22px;background:#555555;"></div><div class="a" style="left:187px;top:31px;width:24px;height:22px;background:#555555;"></div><div class="a" style="left:212px;top:31px;width:24px;height:22px;background:#555555;"></div><div class="a" style="left:237px;top:31px;width:24px;height:22px;background:#555555;"></div><div class="a" style="left:262px;top:31px;width:24px;height:22px;background:#555555;"></div><div class="a" style="left:287px;top:31px;width:14px;height:22px;background:#555555;"></div><div class="a" style="left:307px;top:31px;width:55px;height:22px;background:#555555;"></div><div class="a" style="left:363px;top:31px;width:37px;height:22px;background:#555555;"></div><div class="a" style="left:401px;top:31px;width:36px;height:22px;background:#555555;"></div><div class="a" style="left:438px;top:31px;width:40px;height:22px;background:#555555;"></div><div class="a" style="left:479px;top:31px;width:14px;height:22px;background:#555555;"></div><div class="a" style="left:499px;top:31px;width:63px;height:22px;background:#555555;"></div><div class="a" style="left:563px;top:31px;width:70px;height:22px;background:#555555;"></div><div class="a" style="left:634px;top:31px;width:45px;height:22px;background:#555555;"></div><div class="a" style="left:680px;top:31px;width:58px;height:22px;background:#555555;"></div><div class="a" style="left:739px;top:31px;width:45px;height:22px;background:#555555;"></div><div class="a" style="left:790px;top:31px;width:23px;height:22px;background:#555555;"></div><div class="a" style="left:815px;top:31px;width:24px;height:22px;background:#555555;"></div><div class="a" style="left:1389px;top:31px;width:24px;height:22px;background:#555555;"></div><div class="a" style="left:1414px;top:31px;width:24px;height:22px;background:#555555;"></div><div class="t" style="left:314.3px;top:35.64px;font-size:10.70px;line-height:10.70px;color:#f2f2f2;">Volumen</div><div class="t" style="left:369.9px;top:35.64px;font-size:10.70px;line-height:10.70px;color:#f2f2f2;">SMA</div><div class="t" style="left:407.5px;top:35.64px;font-size:10.70px;line-height:10.70px;color:#f2f2f2;">EMA</div><div class="t" style="left:444.8px;top:35.64px;font-size:10.70px;line-height:10.70px;color:#f2f2f2;">WMA</div><div class="t" style="left:519.0px;top:35.64px;font-size:10.70px;line-height:10.70px;color:#f2f2f2;">5 Jahre</div><div class="t" style="left:583.5px;top:35.64px;font-size:10.70px;line-height:10.70px;color:#f2f2f2;">1 Woche</div><div class="t" style="left:699.9px;top:35.64px;font-size:10.70px;line-height:10.70px;color:#f2f2f2;">Extras</div><div class="t" style="left:26.0px;top:8.20px;font-size:10.75px;line-height:10.75px;color:#dde4ec;">Chart Merck KGaA [5y]</div><svg class="a" style="left:0;top:0" width="1451" height="70" viewBox="0 0 1451 70"><path d="M290.4 40.0h8l-4 4.5z" fill="#dcdcdc"/><path d="M482.3 40.0h8l-4 4.5z" fill="#dcdcdc"/><path d="M506.6 40.0h8l-4 4.5z" fill="#dcdcdc"/><path d="M570.3 40.0h8l-4 4.5z" fill="#dcdcdc"/><path d="M641.0 40.0h8l-4 4.5z" fill="#dcdcdc"/><path d="M687.4 40.0h8l-4 4.5z" fill="#dcdcdc"/><path d="M746.0 40.0h8l-4 4.5z" fill="#dcdcdc"/><g transform="translate(19,42)" fill="#dedede"><circle r="3.6"/><rect x="-1.1" y="-5.6" width="2.2" height="3" transform="rotate(0)"/><rect x="-1.1" y="-5.6" width="2.2" height="3" transform="rotate(45)"/><rect x="-1.1" y="-5.6" width="2.2" height="3" transform="rotate(90)"/><rect x="-1.1" y="-5.6" width="2.2" height="3" transform="rotate(135)"/><rect x="-1.1" y="-5.6" width="2.2" height="3" transform="rotate(180)"/><rect x="-1.1" y="-5.6" width="2.2" height="3" transform="rotate(225)"/><rect x="-1.1" y="-5.6" width="2.2" height="3" transform="rotate(270)"/><rect x="-1.1" y="-5.6" width="2.2" height="3" transform="rotate(315)"/><circle r="1.4" fill="#555"/></g><g fill="none" stroke="#dedede" stroke-width="1.6"><circle cx="42.5" cy="41" r="4.2"/><path d="M45.5 44l3.6 3.6" stroke-width="2.2"/></g><g fill="#dedede"><rect x="63.5" y="36" width="5" height="5"/><rect x="69.5" y="36" width="5" height="5"/><rect x="63.5" y="42" width="5" height="5"/><rect x="69.5" y="42" width="5" height="5"/></g><g fill="#dedede"><rect x="94" y="35.5" width="8" height="2"/><rect x="97" y="35.5" width="2" height="11"/><rect x="100.5" y="40.5" width="5" height="1.2"/><rect x="102.4" y="38.6" width="1.2" height="5"/></g><g fill="#dedede" stroke="#dedede"><path d="M118 46L130 36" stroke-width="1.3"/><rect x="117" y="44" width="3" height="3" stroke="none"/><rect x="128" y="35" width="3" height="3" stroke="none"/></g><g fill="#dedede" stroke="#dedede" stroke-width="1"><path d="M142 36.5h12M142 46.5h12" /><rect x="142" y="35" width="2.5" height="2.5" stroke="none"/><rect x="151.5" y="35" width="2.5" height="2.5" stroke="none"/><rect x="146.5" y="45" width="3" height="2.5" stroke="none"/><path d="M144.5 39v6M148 39v6M151.5 39v6"/><rect x="143.5" y="40.5" width="2" height="2" stroke="none"/><rect x="147" y="40.5" width="2" height="2" stroke="none"/><rect x="150.5" y="40.5" width="2" height="2" stroke="none"/></g><g fill="#dedede"><rect x="166" y="41" width="1" height="1"/><rect x="168" y="41" width="1" height="1"/><rect x="170" y="40.5" width="9" height="1.2"/><rect x="172.5" y="39.5" width="3" height="3"/><rect x="180" y="41" width="1" height="1"/><rect x="182" y="41" width="1" height="1"/></g><g fill="#dedede"><rect x="191" y="40.5" width="15" height="1.2"/><rect x="191" y="39.5" width="3" height="3"/><rect x="197" y="39.5" width="3" height="3"/><rect x="203" y="39.5" width="3" height="3"/></g><g fill="none" stroke="#dedede" stroke-width="1.1"><path d="M218.6 36.3l2.6 2.6"/><path d="M220.2 40.6l2.4-2.4"/><path d="M220.8 41.4l5 5M222.5 39.9l5 5M224 38.4l5 5"/></g><rect x="217.6" y="35.2" width="2.6" height="2.6" transform="rotate(45 218.9 36.5)" fill="#dedede"/><g fill="#dedede"><path d="M242.2 43.5L246.8 38.6H249.8L254.4 43.5" stroke="#dedede" stroke-width="1.3" fill="none"/><rect x="240.8" y="42" width="3.2" height="3.2"/><rect x="251.8" y="42" width="3.2" height="3.2"/></g><g fill="#dedede"><path d="M270.9 35.8L276.4 41L270.9 46.3z" stroke="#dedede" stroke-width="1"/><circle cx="270.9" cy="35.8" r="1.3"/><circle cx="276.4" cy="41" r="1.3"/><circle cx="270.9" cy="46.3" r="1.3"/></g><g fill="#dedede"><rect x="662" y="35" width="1" height="13"/><rect x="660.5" y="37" width="4" height="9" fill="none" stroke="#dedede" stroke-width="1.2"/><rect x="667" y="37" width="1" height="10"/><rect x="666" y="39" width="3" height="5" fill="none" stroke="#dedede" stroke-width="1"/></g><g fill="#dedede"><path d="M764.5 46h12c-1.5-1.5-2-3-2-6c0-2.5-1.6-4.3-4-4.5c-2.4 0.2-4 2-4 4.5c0 3-0.5 4.5-2 6z"/><rect x="769.6" y="34" width="1.8" height="2"/><rect x="768.8" y="46.8" width="3.4" height="1.6"/></g><g fill="none" stroke="#dedede"><circle cx="800" cy="40" r="4" stroke-width="1.5"/><path d="M803 43l3.6 3.6" stroke-width="2.2"/><path d="M797.8 40h4.4M800 37.8v4.4" stroke-width="1.2"/></g><g fill="none" stroke="#dedede" stroke-width="1.5"><path d="M823 39.5c2-2 5-2.5 7-0.5c2 2 2 5 -0.5 7"/></g><path d="M821.5 36.5v5h5z" fill="#dedede"/><g fill="#dedede"><path d="M1396 35.8h4l3.1 3.1v5.1l-3.1 3.1h-4l-3.1-3.1v-5.1z"/><ellipse cx="1398" cy="39.4" rx="2.9" ry="1.4" fill="#555"/><circle cx="1406.5" cy="37.3" r="2.4"/><circle cx="1406.5" cy="44.3" r="2.4"/><circle cx="1406.5" cy="37.3" r="0.8" fill="#555"/><circle cx="1406.5" cy="44.3" r="0.8" fill="#555"/></g><path d="M1418.4 42.5L1420.6 40.8L1421.5 43.2L1424.3 37.6L1426 41.7L1427.3 45.3L1429.4 40.8L1431.8 43.2" fill="none" stroke="#dedede" stroke-width="1.3" stroke-linejoin="round"/></svg><div class="a" style="left:6px;top:73px;width:295px;height:16px;background:rgba(30,30,30,0.72);border-radius:2px"></div><div class="a" style="left:6px;top:89px;width:106px;height:16px;background:rgba(30,30,30,0.72);border-radius:2px"></div><div class="a" style="left:6px;top:105px;width:112px;height:16px;background:rgba(30,30,30,0.72);border-radius:2px"></div><div class="a" style="left:6px;top:121px;width:187px;height:16px;background:rgba(30,30,30,0.72);border-radius:2px"></div><div class="a" style="left:6px;top:137px;width:244px;height:16px;background:rgba(30,30,30,0.72);border-radius:2px"></div><svg class="a" style="left:7px;top:75px" width="13" height="12"><g stroke="#62b535" stroke-width="1.1" fill="#202020"><path d="M2.5 0v11M6.2 0v11M9.9 0v11"/><rect x="1.3" y="3.5" width="2.4" height="4" rx="0.8"/><rect x="5" y="5.5" width="2.4" height="3.5" rx="0.8"/><rect x="8.7" y="4.5" width="2.4" height="4" rx="0.8"/></g></svg><div class="t" style="left:24.8px;top:74.84px;font-size:10.70px;line-height:10.70px;color:#62b535;">Merck KGaA&nbsp; O: 70,967&nbsp; H: 73,091&nbsp; L: 69,390&nbsp; C: 71,927</div><div class="a" style="left:11px;top:96px;width:8px;height:3px;background:#f5e400;"></div><div class="t" style="left:24.8px;top:90.54px;font-size:10.70px;line-height:10.70px;color:#f5e400;">EMA(50)&nbsp; 64,081</div><div class="a" style="left:11px;top:112px;width:8px;height:3px;background:#3fe6c6;"></div><div class="t" style="left:24.8px;top:106.54px;font-size:10.70px;line-height:10.70px;color:#3fe6c6;">EMA(200)&nbsp; 52,872</div><div class="a" style="left:11px;top:128px;width:8px;height:3px;background:#5a3e1c;"></div><div class="t" style="left:24.8px;top:122.84px;font-size:10.70px;line-height:10.70px;color:#5a4020;">BB(20, 2)&nbsp; 73,546&nbsp; <span style="color:#4a3d22">66,779</span>&nbsp; <span style="color:#4a2a22">60,012</span></div><svg class="a" style="left:8px;top:138px" width="13" height="13"><circle cx="6.5" cy="6.5" r="5.2" fill="none" stroke="#e8e8e8" stroke-width="1.2"/><path d="M6.2 3v3.8l2.5 2" fill="none" stroke="#e8e8e8" stroke-width="1.2"/></svg><div class="t" style="left:25.5px;top:138.54px;font-size:10.70px;line-height:10.70px;color:#f0f0f0;">15.10.2012 - 09.04.2018&nbsp;&nbsp; (6 Jahre, 1 Woche)</div><svg class="a" style="left:0;top:505px" width="60" height="35"><path d="M15.8 13h3.2v5h3.7l-5.3 4.6l-5.3-4.6h3.7z" fill="#fafafa"/><path d="M40.8 9.8l5.9 4.1h-11.8z M40.8 24.2l5.9-4.1h-11.8z" fill="#fafafa"/><rect x="34.8" y="15.8" width="12" height="2.4" fill="#fafafa"/></svg><div class="a" style="left:1384px;top:76px;width:4px;height:1px;background:#6a6a6a;"></div><div class="t" style="left:1394.6px;top:69.04px;font-size:12.00px;line-height:12.00px;color:#8a8a8a;-webkit-text-stroke:0">120,000</div><div class="a" style="left:1384px;top:108px;width:4px;height:1px;background:#6a6a6a;"></div><div class="t" style="left:1394.6px;top:101.04px;font-size:12.00px;line-height:12.00px;color:#8a8a8a;-webkit-text-stroke:0">110,000</div><div class="a" style="left:1384px;top:144px;width:4px;height:1px;background:#6a6a6a;"></div><div class="t" style="left:1394.6px;top:137.04px;font-size:12.00px;line-height:12.00px;color:#8a8a8a;-webkit-text-stroke:0">100,000</div><div class="a" style="left:1384px;top:184px;width:4px;height:1px;background:#6a6a6a;"></div><div class="t" style="left:1394.6px;top:177.04px;font-size:12.00px;line-height:12.00px;color:#8a8a8a;-webkit-text-stroke:0">90,000</div><div class="a" style="left:1384px;top:278px;width:4px;height:1px;background:#6a6a6a;"></div><div class="t" style="left:1394.6px;top:271.04px;font-size:12.00px;line-height:12.00px;color:#8a8a8a;-webkit-text-stroke:0">70,000</div><div class="a" style="left:1384px;top:336px;width:4px;height:1px;background:#6a6a6a;"></div><div class="t" style="left:1394.6px;top:329.04px;font-size:12.00px;line-height:12.00px;color:#8a8a8a;-webkit-text-stroke:0">60,000</div><div class="a" style="left:1384px;top:405px;width:4px;height:1px;background:#6a6a6a;"></div><div class="t" style="left:1394.6px;top:398.04px;font-size:12.00px;line-height:12.00px;color:#8a8a8a;-webkit-text-stroke:0">50,000</div><div class="a" style="left:1384px;top:489px;width:4px;height:1px;background:#6a6a6a;"></div><div class="t" style="left:1394.6px;top:482.04px;font-size:12.00px;line-height:12.00px;color:#8a8a8a;-webkit-text-stroke:0">40,000</div><div class="a" style="left:1384px;top:569px;width:4px;height:1px;background:#6a6a6a;"></div><div class="a" style="left:1390px;top:566px;width:54px;height:12px;overflow:hidden"><div class="t" style="left:4.6px;top:-3.96px;font-size:12.00px;line-height:12.00px;color:#8a8a8a;-webkit-text-stroke:0">100,00</div></div><div class="a" style="left:1384px;top:634px;width:4px;height:1px;background:#6a6a6a;"></div><div class="t" style="left:1394.6px;top:627.04px;font-size:12.00px;line-height:12.00px;color:#8a8a8a;-webkit-text-stroke:0">0,00</div><div class="a" style="left:1384px;top:644px;width:4px;height:1px;background:#6a6a6a;"></div><div class="a" style="left:1390px;top:641px;width:54px;height:12px;overflow:hidden"><div class="t" style="left:4.6px;top:-3.96px;font-size:12.00px;line-height:12.00px;color:#8a8a8a;-webkit-text-stroke:0">100,00</div></div><div class="a" style="left:1384px;top:709px;width:4px;height:1px;background:#6a6a6a;"></div><div class="t" style="left:1394.6px;top:702.04px;font-size:12.00px;line-height:12.00px;color:#8a8a8a;-webkit-text-stroke:0">0,00</div><div class="a" style="left:1384px;top:718px;width:4px;height:1px;background:#6a6a6a;"></div><div class="a" style="left:1390px;top:716px;width:54px;height:12px;overflow:hidden"><div class="t" style="left:4.6px;top:-4.96px;font-size:12.00px;line-height:12.00px;color:#8a8a8a;-webkit-text-stroke:0">100,00</div></div><div class="a" style="left:1384px;top:769px;width:4px;height:1px;background:#6a6a6a;"></div><div class="t" style="left:1394.6px;top:762.04px;font-size:12.00px;line-height:12.00px;color:#8a8a8a;-webkit-text-stroke:0">0,00</div><div class="a" style="left:1384px;top:807px;width:4px;height:1px;background:#6a6a6a;"></div><div class="t" style="left:1394.6px;top:800.04px;font-size:12.00px;line-height:12.00px;color:#8a8a8a;-webkit-text-stroke:0">0,000</div><svg class="a" style="left:1383px;top:83.7px" width="62" height="20"><path d="M0 9.6L8 0H61V19.2H8z" fill="#ffc800"/></svg><div class="t" style="left:1394.9px;top:86.74px;font-size:12.00px;line-height:12.00px;color:#000;-webkit-text-stroke:0.1px currentColor">114,715</div><svg class="a" style="left:1383px;top:216.8px" width="62" height="20"><path d="M0 9.6L8 0H61V19.2H8z" fill="#66bb33"/></svg><div class="t" style="left:1394.9px;top:219.84px;font-size:12.00px;line-height:12.00px;color:#000;-webkit-text-stroke:0.1px currentColor">80,441</div><svg class="a" style="left:1383px;top:255.7px" width="62" height="20"><path d="M0 9.6L8 0H61V19.2H8z" fill="#ffffff"/></svg><div class="t" style="left:1394.9px;top:258.74px;font-size:12.00px;line-height:12.00px;color:#000;-webkit-text-stroke:0.1px currentColor">72,500</div><svg class="a" style="left:1383px;top:348.7px" width="62" height="20"><path d="M0 9.6L8 0H61V19.2H8z" fill="#ffffff"/></svg><div class="t" style="left:1394.9px;top:351.74px;font-size:12.00px;line-height:12.00px;color:#000;-webkit-text-stroke:0.1px currentColor">56,730</div><div class="a" style="left:51px;top:560px;width:1px;height:3px;background:#c8c8c8;"></div><div class="t" style="left:1.9px;width:100px;text-align:center;top:546.14px;font-size:12.00px;line-height:12.00px;color:#8c8c8c;-webkit-text-stroke:0">Jan '13</div><div class="a" style="left:153px;top:560px;width:1px;height:3px;background:#c8c8c8;"></div><div class="t" style="left:103.3px;width:100px;text-align:center;top:546.14px;font-size:12.00px;line-height:12.00px;color:#8c8c8c;-webkit-text-stroke:0">Jul</div><div class="a" style="left:262px;top:560px;width:1px;height:3px;background:#c8c8c8;"></div><div class="t" style="left:212.9px;width:100px;text-align:center;top:546.14px;font-size:12.00px;line-height:12.00px;color:#8c8c8c;-webkit-text-stroke:0">Jan '14</div><div class="a" style="left:368px;top:560px;width:1px;height:3px;background:#c8c8c8;"></div><div class="t" style="left:318.3px;width:100px;text-align:center;top:546.14px;font-size:12.00px;line-height:12.00px;color:#8c8c8c;-webkit-text-stroke:0">Jul</div><div class="a" style="left:473px;top:560px;width:1px;height:3px;background:#c8c8c8;"></div><div class="t" style="left:423.8px;width:100px;text-align:center;top:546.14px;font-size:12.00px;line-height:12.00px;color:#8c8c8c;-webkit-text-stroke:0">Jan '15</div><div class="a" style="left:579px;top:560px;width:1px;height:3px;background:#c8c8c8;"></div><div class="t" style="left:529.3px;width:100px;text-align:center;top:546.14px;font-size:12.00px;line-height:12.00px;color:#8c8c8c;-webkit-text-stroke:0">Jul</div><div class="a" style="left:684px;top:560px;width:1px;height:3px;background:#c8c8c8;"></div><div class="t" style="left:634.7px;width:100px;text-align:center;top:546.14px;font-size:12.00px;line-height:12.00px;color:#8c8c8c;-webkit-text-stroke:0">Jan '16</div><div class="a" style="left:790px;top:560px;width:1px;height:3px;background:#c8c8c8;"></div><div class="t" style="left:740.2px;width:100px;text-align:center;top:546.14px;font-size:12.00px;line-height:12.00px;color:#8c8c8c;-webkit-text-stroke:0">Jul</div><div class="a" style="left:895px;top:560px;width:1px;height:3px;background:#c8c8c8;"></div><div class="t" style="left:845.7px;width:100px;text-align:center;top:546.14px;font-size:12.00px;line-height:12.00px;color:#8c8c8c;-webkit-text-stroke:0">Jan '17</div><div class="a" style="left:1001px;top:560px;width:1px;height:3px;background:#c8c8c8;"></div><div class="t" style="left:951.1px;width:100px;text-align:center;top:546.14px;font-size:12.00px;line-height:12.00px;color:#8c8c8c;-webkit-text-stroke:0">Jul</div><div class="a" style="left:1106px;top:560px;width:1px;height:3px;background:#c8c8c8;"></div><div class="t" style="left:1056.6px;width:100px;text-align:center;top:546.14px;font-size:12.00px;line-height:12.00px;color:#8c8c8c;-webkit-text-stroke:0">Jan '18</div><div class="a" style="left:394.5px;top:541.8px;width:76px;height:21.2px;background:#ffc800;"></div><div class="a" style="left:433px;top:560px;width:1px;height:3px;background:#000;"></div><div class="t" style="left:401.9px;top:545.89px;font-size:12.30px;line-height:12.30px;color:#000;-webkit-text-stroke:0.1px currentColor">27.10.2014</div><div class="a" style="left:2px;top:566px;width:152px;height:22px;background:rgba(34,34,34,0.7);"></div><div class="a" style="left:11px;top:578px;width:8px;height:3px;background:#f5cc00;"></div><div class="t" style="left:25.2px;top:573.14px;font-size:10.70px;line-height:10.70px;color:#f5cc00;">FSTOC(5, 3)</div><div class="t" style="left:92.0px;top:573.14px;font-size:10.70px;line-height:10.70px;color:#f5cc00;">72,78</div><div class="t" style="left:124.5px;top:573.14px;font-size:10.70px;line-height:10.70px;color:#3a9fd0;">51,28</div><div class="a" style="left:2px;top:641px;width:166px;height:22px;background:rgba(34,34,34,0.7);"></div><div class="a" style="left:11px;top:652px;width:8px;height:3px;background:#7a68a0;"></div><div class="t" style="left:25.2px;top:647.64px;font-size:10.70px;line-height:10.70px;color:#7a68a0;">SSTOC(5, 3, 3)</div><div class="t" style="left:104.3px;top:647.64px;font-size:10.70px;line-height:10.70px;color:#7a68a0;">51,28</div><div class="t" style="left:137.8px;top:647.64px;font-size:10.70px;line-height:10.70px;color:#b04ab0;">41,79</div><div class="a" style="left:2px;top:716px;width:90px;height:22px;background:rgba(34,34,34,0.7);"></div><div class="a" style="left:11px;top:728px;width:8px;height:3px;background:#6a8a4a;"></div><div class="t" style="left:25.1px;top:723.14px;font-size:10.70px;line-height:10.70px;color:#6a8a4a;">RSI(8)</div><div class="t" style="left:60.9px;top:723.14px;font-size:10.70px;line-height:10.70px;color:#6a8a4a;">67,08</div><div class="a" style="left:11px;top:787px;width:8px;height:3px;background:#3fe6c6;"></div><div class="t" style="left:24.8px;top:781.54px;font-size:10.70px;line-height:10.70px;color:#3fe6c6;">MACD(12, 26, 9)</div><div class="t" style="left:111.1px;top:781.54px;font-size:10.70px;line-height:10.70px;color:#3fe6c6;">2,389</div><div class="t" style="left:144.4px;top:781.54px;font-size:10.70px;line-height:10.70px;color:#ee1111;">1,960</div><div class="t" style="left:177.3px;top:781.54px;font-size:10.70px;line-height:10.70px;color:#8a7030;">0,428</div><div class="a" style="left:2px;top:816px;width:31px;height:9px;background:#050505;"></div><div class="a" style="left:4px;top:818px;width:5px;height:5px;background:#1188ee;"></div><div class="a" style="left:11px;top:818px;width:5px;height:5px;background:#1a3a1a;"></div><div class="a" style="left:18px;top:818px;width:5px;height:5px;background:#4a2a18;"></div><div class="a" style="left:25px;top:818px;width:5px;height:5px;background:#5a4a1a;"></div><svg class="a" style="left:1430px;top:811px" width="16" height="16"><path d="M15 0V15H0z" fill="#3a3a3a"/><path d="M14 8V14H8z" fill="#111"/></svg></body></html>
